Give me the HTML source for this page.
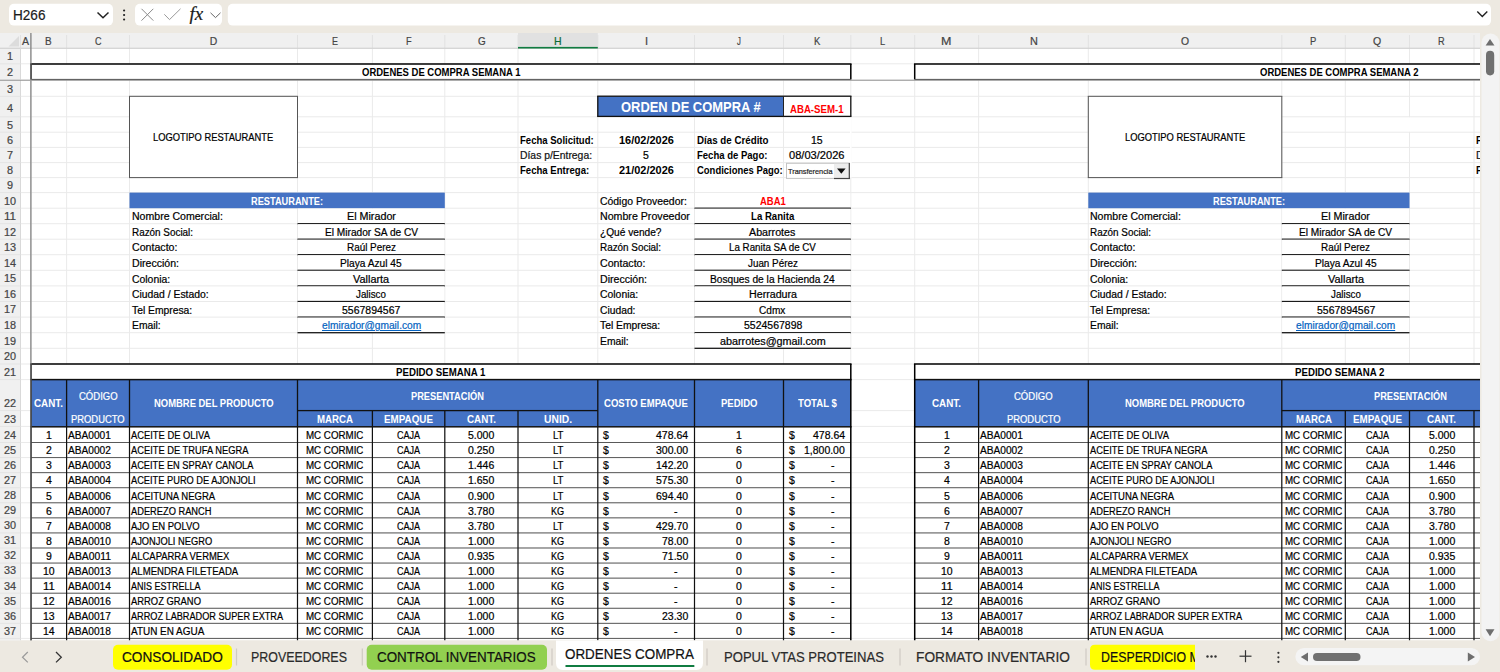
<!DOCTYPE html>
<html><head><meta charset="utf-8">
<style>
html,body{margin:0;padding:0;}
body{width:1500px;height:672px;overflow:hidden;position:relative;background:#EDE9E1;
font-family:"Liberation Sans",sans-serif;}
svg{position:absolute;left:0;top:0;}
.t{position:absolute;white-space:nowrap;transform-origin:0 0;-webkit-text-stroke:0.2px currentColor;}
#st{position:absolute;left:0;top:33px;width:1480px;height:607.5px;overflow:hidden;}
#st .in{position:absolute;left:0;top:-33px;width:1480px;height:672px;}
#cut{position:absolute;left:1090px;top:640px;width:105px;height:32px;overflow:hidden;}
</style></head><body>

<svg width="1500" height="672" viewBox="0 0 1500 672" shape-rendering="geometricPrecision">
<defs><clipPath id="cp"><rect x="0" y="33" width="1480" height="607.5"/></clipPath></defs>
<rect x="0" y="0" width="1500" height="33" fill="#EDE9E1"/>
<rect x="9" y="3.7" width="104" height="21.9" fill="#fff" rx="5"/>
<path d="M97.5 12.5 L103 17.7 L108.5 12.5" fill="none" stroke="#222" stroke-width="1.5"/>
<rect x="123" y="9.4" width="2.2" height="2.2" fill="#222" rx="1.1"/>
<rect x="123" y="13.9" width="2.2" height="2.2" fill="#222" rx="1.1"/>
<rect x="123" y="18.4" width="2.2" height="2.2" fill="#222" rx="1.1"/>
<rect x="135" y="3.7" width="87" height="21.9" fill="#fff" rx="5"/>
<path d="M141.5 8.8 L153.3 20.6 M153.3 8.8 L141.5 20.6" fill="none" stroke="#8a8a8a" stroke-width="1"/>
<path d="M164.3 14.3 L169.5 19.6 L180.5 8.8" fill="none" stroke="#9a9a9a" stroke-width="1"/>
<path d="M210.5 12.8 L215.5 17.6 L220.5 12.8" fill="none" stroke="#666" stroke-width="1"/>
<rect x="227.8" y="3.7" width="1263.2" height="21.9" fill="#fff" rx="5"/>
<path d="M1477.3 11.5 L1482.3 16.5 L1487.3 11.5" fill="none" stroke="#222" stroke-width="1.4"/>
<g clip-path="url(#cp)">
<rect x="0" y="33" width="1480" height="607.5" fill="#fff"/>
<rect x="0" y="33" width="1480" height="15.3" fill="#F0F0F0"/>
<rect x="518" y="33" width="79.8" height="15.3" fill="#E1E1E1"/>
<rect x="0" y="48.3" width="20.5" height="592.2" fill="#F0F0F0"/>
<path d="M19 36 L19 46.5 L8.5 46.5 Z" fill="#DCDCDC"/>
<rect x="30.5" y="48.3" width="1" height="592.2" fill="#EAEAEA"/>
<rect x="66.1" y="48.3" width="1" height="592.2" fill="#EAEAEA"/>
<rect x="129" y="48.3" width="1" height="592.2" fill="#EAEAEA"/>
<rect x="297" y="48.3" width="1" height="592.2" fill="#EAEAEA"/>
<rect x="371.9" y="48.3" width="1" height="592.2" fill="#EAEAEA"/>
<rect x="444.3" y="48.3" width="1" height="592.2" fill="#EAEAEA"/>
<rect x="517.5" y="48.3" width="1" height="592.2" fill="#EAEAEA"/>
<rect x="597.3" y="48.3" width="1" height="592.2" fill="#EAEAEA"/>
<rect x="694" y="48.3" width="1" height="592.2" fill="#EAEAEA"/>
<rect x="783" y="48.3" width="1" height="592.2" fill="#EAEAEA"/>
<rect x="850.3" y="48.3" width="1" height="592.2" fill="#EAEAEA"/>
<rect x="914.2" y="48.3" width="1" height="592.2" fill="#EAEAEA"/>
<rect x="978.1" y="48.3" width="1" height="592.2" fill="#EAEAEA"/>
<rect x="1087.8" y="48.3" width="1" height="592.2" fill="#EAEAEA"/>
<rect x="1281.3" y="48.3" width="1" height="592.2" fill="#EAEAEA"/>
<rect x="1344.8" y="48.3" width="1" height="592.2" fill="#EAEAEA"/>
<rect x="1409" y="48.3" width="1" height="592.2" fill="#EAEAEA"/>
<rect x="1473.5" y="48.3" width="1" height="592.2" fill="#EAEAEA"/>
<rect x="20.5" y="63.3" width="1459.5" height="1" fill="#EAEAEA"/>
<rect x="20.5" y="79.1" width="1459.5" height="1" fill="#EAEAEA"/>
<rect x="20.5" y="95.8" width="1459.5" height="1" fill="#EAEAEA"/>
<rect x="20.5" y="116.3" width="1459.5" height="1" fill="#EAEAEA"/>
<rect x="20.5" y="131.7" width="1459.5" height="1" fill="#EAEAEA"/>
<rect x="20.5" y="146.9" width="1459.5" height="1" fill="#EAEAEA"/>
<rect x="20.5" y="162.1" width="1459.5" height="1" fill="#EAEAEA"/>
<rect x="20.5" y="177.1" width="1459.5" height="1" fill="#EAEAEA"/>
<rect x="20.5" y="192.1" width="1459.5" height="1" fill="#EAEAEA"/>
<rect x="20.5" y="207.7" width="1459.5" height="1" fill="#EAEAEA"/>
<rect x="20.5" y="223.2" width="1459.5" height="1" fill="#EAEAEA"/>
<rect x="20.5" y="238.7" width="1459.5" height="1" fill="#EAEAEA"/>
<rect x="20.5" y="254.2" width="1459.5" height="1" fill="#EAEAEA"/>
<rect x="20.5" y="269.8" width="1459.5" height="1" fill="#EAEAEA"/>
<rect x="20.5" y="285.4" width="1459.5" height="1" fill="#EAEAEA"/>
<rect x="20.5" y="301" width="1459.5" height="1" fill="#EAEAEA"/>
<rect x="20.5" y="316.6" width="1459.5" height="1" fill="#EAEAEA"/>
<rect x="20.5" y="332.2" width="1459.5" height="1" fill="#EAEAEA"/>
<rect x="20.5" y="347.8" width="1459.5" height="1" fill="#EAEAEA"/>
<rect x="20.5" y="363.5" width="1459.5" height="1" fill="#EAEAEA"/>
<rect x="20.5" y="379.1" width="1459.5" height="1" fill="#EAEAEA"/>
<rect x="20.5" y="410.1" width="1459.5" height="1" fill="#EAEAEA"/>
<rect x="20.5" y="425.9" width="1459.5" height="1" fill="#EAEAEA"/>
<rect x="20.5" y="442" width="1459.5" height="1" fill="#EAEAEA"/>
<rect x="20.5" y="457.07" width="1459.5" height="1" fill="#EAEAEA"/>
<rect x="20.5" y="472.14" width="1459.5" height="1" fill="#EAEAEA"/>
<rect x="20.5" y="487.21" width="1459.5" height="1" fill="#EAEAEA"/>
<rect x="20.5" y="502.28" width="1459.5" height="1" fill="#EAEAEA"/>
<rect x="20.5" y="517.35" width="1459.5" height="1" fill="#EAEAEA"/>
<rect x="20.5" y="532.42" width="1459.5" height="1" fill="#EAEAEA"/>
<rect x="20.5" y="547.49" width="1459.5" height="1" fill="#EAEAEA"/>
<rect x="20.5" y="562.56" width="1459.5" height="1" fill="#EAEAEA"/>
<rect x="20.5" y="577.63" width="1459.5" height="1" fill="#EAEAEA"/>
<rect x="20.5" y="592.7" width="1459.5" height="1" fill="#EAEAEA"/>
<rect x="20.5" y="607.77" width="1459.5" height="1" fill="#EAEAEA"/>
<rect x="20.5" y="622.84" width="1459.5" height="1" fill="#EAEAEA"/>
<rect x="20.5" y="637.91" width="1459.5" height="1" fill="#EAEAEA"/>
<rect x="20" y="35" width="1" height="13.3" fill="#E2E2E2"/>
<rect x="30.5" y="35" width="1" height="13.3" fill="#E2E2E2"/>
<rect x="66.1" y="35" width="1" height="13.3" fill="#E2E2E2"/>
<rect x="129" y="35" width="1" height="13.3" fill="#E2E2E2"/>
<rect x="297" y="35" width="1" height="13.3" fill="#E2E2E2"/>
<rect x="371.9" y="35" width="1" height="13.3" fill="#E2E2E2"/>
<rect x="444.3" y="35" width="1" height="13.3" fill="#E2E2E2"/>
<rect x="517.5" y="35" width="1" height="13.3" fill="#E2E2E2"/>
<rect x="597.3" y="35" width="1" height="13.3" fill="#E2E2E2"/>
<rect x="694" y="35" width="1" height="13.3" fill="#E2E2E2"/>
<rect x="783" y="35" width="1" height="13.3" fill="#E2E2E2"/>
<rect x="850.3" y="35" width="1" height="13.3" fill="#E2E2E2"/>
<rect x="914.2" y="35" width="1" height="13.3" fill="#E2E2E2"/>
<rect x="978.1" y="35" width="1" height="13.3" fill="#E2E2E2"/>
<rect x="1087.8" y="35" width="1" height="13.3" fill="#E2E2E2"/>
<rect x="1281.3" y="35" width="1" height="13.3" fill="#E2E2E2"/>
<rect x="1344.8" y="35" width="1" height="13.3" fill="#E2E2E2"/>
<rect x="1409" y="35" width="1" height="13.3" fill="#E2E2E2"/>
<rect x="1473.5" y="35" width="1" height="13.3" fill="#E2E2E2"/>
<rect x="0" y="47.7" width="1480" height="1.2" fill="#D2D2D2"/>
<rect x="20" y="48.3" width="1" height="592.2" fill="#D9D9D9"/>
<rect x="0" y="63.3" width="20.5" height="1" fill="#E4E4E4"/>
<rect x="0" y="79.1" width="20.5" height="1" fill="#E4E4E4"/>
<rect x="0" y="95.8" width="20.5" height="1" fill="#E4E4E4"/>
<rect x="0" y="116.3" width="20.5" height="1" fill="#E4E4E4"/>
<rect x="0" y="131.7" width="20.5" height="1" fill="#E4E4E4"/>
<rect x="0" y="146.9" width="20.5" height="1" fill="#E4E4E4"/>
<rect x="0" y="162.1" width="20.5" height="1" fill="#E4E4E4"/>
<rect x="0" y="177.1" width="20.5" height="1" fill="#E4E4E4"/>
<rect x="0" y="192.1" width="20.5" height="1" fill="#E4E4E4"/>
<rect x="0" y="207.7" width="20.5" height="1" fill="#E4E4E4"/>
<rect x="0" y="223.2" width="20.5" height="1" fill="#E4E4E4"/>
<rect x="0" y="238.7" width="20.5" height="1" fill="#E4E4E4"/>
<rect x="0" y="254.2" width="20.5" height="1" fill="#E4E4E4"/>
<rect x="0" y="269.8" width="20.5" height="1" fill="#E4E4E4"/>
<rect x="0" y="285.4" width="20.5" height="1" fill="#E4E4E4"/>
<rect x="0" y="301" width="20.5" height="1" fill="#E4E4E4"/>
<rect x="0" y="316.6" width="20.5" height="1" fill="#E4E4E4"/>
<rect x="0" y="332.2" width="20.5" height="1" fill="#E4E4E4"/>
<rect x="0" y="347.8" width="20.5" height="1" fill="#E4E4E4"/>
<rect x="0" y="363.5" width="20.5" height="1" fill="#E4E4E4"/>
<rect x="0" y="379.1" width="20.5" height="1" fill="#E4E4E4"/>
<rect x="0" y="410.1" width="20.5" height="1" fill="#E4E4E4"/>
<rect x="0" y="425.9" width="20.5" height="1" fill="#E4E4E4"/>
<rect x="0" y="442" width="20.5" height="1" fill="#E4E4E4"/>
<rect x="0" y="457.07" width="20.5" height="1" fill="#E4E4E4"/>
<rect x="0" y="472.14" width="20.5" height="1" fill="#E4E4E4"/>
<rect x="0" y="487.21" width="20.5" height="1" fill="#E4E4E4"/>
<rect x="0" y="502.28" width="20.5" height="1" fill="#E4E4E4"/>
<rect x="0" y="517.35" width="20.5" height="1" fill="#E4E4E4"/>
<rect x="0" y="532.42" width="20.5" height="1" fill="#E4E4E4"/>
<rect x="0" y="547.49" width="20.5" height="1" fill="#E4E4E4"/>
<rect x="0" y="562.56" width="20.5" height="1" fill="#E4E4E4"/>
<rect x="0" y="577.63" width="20.5" height="1" fill="#E4E4E4"/>
<rect x="0" y="592.7" width="20.5" height="1" fill="#E4E4E4"/>
<rect x="0" y="607.77" width="20.5" height="1" fill="#E4E4E4"/>
<rect x="0" y="622.84" width="20.5" height="1" fill="#E4E4E4"/>
<rect x="0" y="637.91" width="20.5" height="1" fill="#E4E4E4"/>
<rect x="518" y="46.9" width="79.8" height="1.6" fill="#107C41"/>
<rect x="850" y="117.4" width="1.6" height="60.2" fill="#fff"/>
<rect x="1408.7" y="117.4" width="1.6" height="14.2" fill="#fff"/>
<rect x="31.5" y="64.3" width="818.8" height="14.8" fill="#fff"/>
<rect x="30.25" y="63.25" width="821.3" height="1.5" fill="#000"/>
<rect x="30.25" y="64" width="1.5" height="15.5" fill="#000"/>
<rect x="850.05" y="64" width="1.5" height="15.5" fill="#000"/>
<rect x="31" y="78.9" width="819.8" height="1" fill="#444"/>
<rect x="915.2" y="64.3" width="564.3" height="14.8" fill="#fff"/>
<rect x="913.95" y="63.25" width="566.05" height="1.5" fill="#000"/>
<rect x="913.95" y="64" width="1.5" height="15.5" fill="#000"/>
<rect x="914.7" y="78.9" width="565.3" height="1" fill="#444"/>
<rect x="130" y="96.8" width="167" height="80.3" fill="#fff"/>
<rect x="129" y="95.8" width="169" height="1" fill="#555"/>
<rect x="129" y="177.1" width="169" height="1" fill="#555"/>
<rect x="129" y="96.3" width="1" height="81.3" fill="#555"/>
<rect x="297" y="96.3" width="1" height="81.3" fill="#555"/>
<rect x="1088.8" y="96.8" width="192.5" height="80.3" fill="#fff"/>
<rect x="1087.8" y="95.8" width="194.5" height="1" fill="#555"/>
<rect x="1087.8" y="177.1" width="194.5" height="1" fill="#555"/>
<rect x="1087.8" y="96.3" width="1" height="81.3" fill="#555"/>
<rect x="1281.3" y="96.3" width="1" height="81.3" fill="#555"/>
<rect x="597.8" y="96.3" width="185.7" height="20.5" fill="#4472C4"/>
<rect x="784" y="96.8" width="66.3" height="19.5" fill="#fff"/>
<rect x="597.15" y="95.55" width="254.3" height="1.3" fill="#111"/>
<rect x="597.15" y="115.75" width="254.3" height="1.3" fill="#111"/>
<rect x="597.15" y="96.2" width="1.3" height="20.2" fill="#111"/>
<rect x="850.15" y="96.2" width="1.3" height="20.2" fill="#111"/>
<rect x="783" y="96.2" width="1" height="20.2" fill="#222"/>
<rect x="786" y="162.8" width="63.8" height="16.1" fill="#C4C4C4"/>
<rect x="787" y="163.8" width="61.8" height="14.1" fill="#fff"/>
<rect x="834" y="163.8" width="14.8" height="14.1" fill="#EDEDED"/>
<rect x="848.7" y="163" width="1.2" height="16" fill="#444"/>
<rect x="834" y="177.9" width="16" height="1.2" fill="#444"/>
<path d="M837 168.6 L845.6 168.6 L841.3 173.7 Z" fill="#111"/>
<rect x="129.5" y="192.6" width="315.3" height="15.6" fill="#4472C4"/>
<rect x="298" y="208.7" width="146.3" height="14.5" fill="#fff"/>
<rect x="297.5" y="223.05" width="147.3" height="1.3" fill="#1a1a1a"/>
<rect x="298" y="224.2" width="146.3" height="14.5" fill="#fff"/>
<rect x="297.5" y="238.55" width="147.3" height="1.3" fill="#1a1a1a"/>
<rect x="298" y="239.7" width="146.3" height="14.5" fill="#fff"/>
<rect x="297.5" y="254.05" width="147.3" height="1.3" fill="#1a1a1a"/>
<rect x="298" y="255.2" width="146.3" height="14.6" fill="#fff"/>
<rect x="297.5" y="269.65" width="147.3" height="1.3" fill="#1a1a1a"/>
<rect x="298" y="270.8" width="146.3" height="14.6" fill="#fff"/>
<rect x="297.5" y="285.25" width="147.3" height="1.3" fill="#1a1a1a"/>
<rect x="298" y="286.4" width="146.3" height="14.6" fill="#fff"/>
<rect x="297.5" y="300.85" width="147.3" height="1.3" fill="#1a1a1a"/>
<rect x="298" y="302" width="146.3" height="14.6" fill="#fff"/>
<rect x="297.5" y="316.45" width="147.3" height="1.3" fill="#1a1a1a"/>
<rect x="298" y="317.6" width="146.3" height="14.6" fill="#fff"/>
<rect x="297.5" y="332.05" width="147.3" height="1.3" fill="#1a1a1a"/>
<rect x="1088.3" y="192.6" width="321.2" height="15.6" fill="#4472C4"/>
<rect x="1282.3" y="208.7" width="126.7" height="14.5" fill="#fff"/>
<rect x="1281.8" y="223.05" width="127.7" height="1.3" fill="#1a1a1a"/>
<rect x="1282.3" y="224.2" width="126.7" height="14.5" fill="#fff"/>
<rect x="1281.8" y="238.55" width="127.7" height="1.3" fill="#1a1a1a"/>
<rect x="1282.3" y="239.7" width="126.7" height="14.5" fill="#fff"/>
<rect x="1281.8" y="254.05" width="127.7" height="1.3" fill="#1a1a1a"/>
<rect x="1282.3" y="255.2" width="126.7" height="14.6" fill="#fff"/>
<rect x="1281.8" y="269.65" width="127.7" height="1.3" fill="#1a1a1a"/>
<rect x="1282.3" y="270.8" width="126.7" height="14.6" fill="#fff"/>
<rect x="1281.8" y="285.25" width="127.7" height="1.3" fill="#1a1a1a"/>
<rect x="1282.3" y="286.4" width="126.7" height="14.6" fill="#fff"/>
<rect x="1281.8" y="300.85" width="127.7" height="1.3" fill="#1a1a1a"/>
<rect x="1282.3" y="302" width="126.7" height="14.6" fill="#fff"/>
<rect x="1281.8" y="316.45" width="127.7" height="1.3" fill="#1a1a1a"/>
<rect x="1282.3" y="317.6" width="126.7" height="14.6" fill="#fff"/>
<rect x="1281.8" y="332.05" width="127.7" height="1.3" fill="#1a1a1a"/>
<rect x="695" y="193.1" width="155.3" height="14.6" fill="#fff"/>
<rect x="694.5" y="207.55" width="156.3" height="1.3" fill="#1a1a1a"/>
<rect x="695" y="208.7" width="155.3" height="14.5" fill="#fff"/>
<rect x="694.5" y="223.05" width="156.3" height="1.3" fill="#1a1a1a"/>
<rect x="695" y="224.2" width="155.3" height="14.5" fill="#fff"/>
<rect x="694.5" y="238.55" width="156.3" height="1.3" fill="#1a1a1a"/>
<rect x="695" y="239.7" width="155.3" height="14.5" fill="#fff"/>
<rect x="694.5" y="254.05" width="156.3" height="1.3" fill="#1a1a1a"/>
<rect x="695" y="255.2" width="155.3" height="14.6" fill="#fff"/>
<rect x="694.5" y="269.65" width="156.3" height="1.3" fill="#1a1a1a"/>
<rect x="695" y="270.8" width="155.3" height="14.6" fill="#fff"/>
<rect x="694.5" y="285.25" width="156.3" height="1.3" fill="#1a1a1a"/>
<rect x="695" y="286.4" width="155.3" height="14.6" fill="#fff"/>
<rect x="694.5" y="300.85" width="156.3" height="1.3" fill="#1a1a1a"/>
<rect x="695" y="302" width="155.3" height="14.6" fill="#fff"/>
<rect x="694.5" y="316.45" width="156.3" height="1.3" fill="#1a1a1a"/>
<rect x="695" y="317.6" width="155.3" height="14.6" fill="#fff"/>
<rect x="694.5" y="332.05" width="156.3" height="1.3" fill="#1a1a1a"/>
<rect x="695" y="333.2" width="155.3" height="14.6" fill="#fff"/>
<rect x="694.5" y="347.65" width="156.3" height="1.3" fill="#1a1a1a"/>
<rect x="31.5" y="364.5" width="818.8" height="14.6" fill="#fff"/>
<rect x="31" y="379.6" width="819.8" height="46.8" fill="#4472C4"/>
<rect x="31" y="442" width="819.8" height="1" fill="#595959"/>
<rect x="31" y="457.07" width="819.8" height="1" fill="#595959"/>
<rect x="31" y="472.14" width="819.8" height="1" fill="#595959"/>
<rect x="31" y="487.21" width="819.8" height="1" fill="#595959"/>
<rect x="31" y="502.28" width="819.8" height="1" fill="#595959"/>
<rect x="31" y="517.35" width="819.8" height="1" fill="#595959"/>
<rect x="31" y="532.42" width="819.8" height="1" fill="#595959"/>
<rect x="31" y="547.49" width="819.8" height="1" fill="#595959"/>
<rect x="31" y="562.56" width="819.8" height="1" fill="#595959"/>
<rect x="31" y="577.63" width="819.8" height="1" fill="#595959"/>
<rect x="31" y="592.7" width="819.8" height="1" fill="#595959"/>
<rect x="31" y="607.77" width="819.8" height="1" fill="#595959"/>
<rect x="31" y="622.84" width="819.8" height="1" fill="#595959"/>
<rect x="31" y="637.91" width="819.8" height="1" fill="#595959"/>
<rect x="65.95" y="379.6" width="1.3" height="46.8" fill="#111"/>
<rect x="128.85" y="379.6" width="1.3" height="46.8" fill="#111"/>
<rect x="296.85" y="379.6" width="1.3" height="46.8" fill="#111"/>
<rect x="597.15" y="379.6" width="1.3" height="46.8" fill="#111"/>
<rect x="693.85" y="379.6" width="1.3" height="46.8" fill="#111"/>
<rect x="782.85" y="379.6" width="1.3" height="46.8" fill="#111"/>
<rect x="371.75" y="410.6" width="1.3" height="15.8" fill="#111"/>
<rect x="444.15" y="410.6" width="1.3" height="15.8" fill="#111"/>
<rect x="517.35" y="410.6" width="1.3" height="15.8" fill="#111"/>
<rect x="297.5" y="409.95" width="300.3" height="1.3" fill="#111"/>
<rect x="66" y="426.4" width="1.2" height="214.1" fill="#111"/>
<rect x="128.9" y="426.4" width="1.2" height="214.1" fill="#111"/>
<rect x="296.9" y="426.4" width="1.2" height="214.1" fill="#111"/>
<rect x="371.8" y="426.4" width="1.2" height="214.1" fill="#111"/>
<rect x="444.2" y="426.4" width="1.2" height="214.1" fill="#111"/>
<rect x="517.4" y="426.4" width="1.2" height="214.1" fill="#111"/>
<rect x="597.2" y="426.4" width="1.2" height="214.1" fill="#111"/>
<rect x="693.9" y="426.4" width="1.2" height="214.1" fill="#111"/>
<rect x="782.9" y="426.4" width="1.2" height="214.1" fill="#111"/>
<rect x="30.25" y="363.25" width="821.3" height="1.5" fill="#000"/>
<rect x="30.25" y="378.85" width="821.3" height="1.5" fill="#111"/>
<rect x="30.25" y="426.05" width="821.3" height="1.5" fill="#111"/>
<rect x="30.25" y="364" width="1.5" height="276.5" fill="#000"/>
<rect x="850.05" y="364" width="1.5" height="276.5" fill="#000"/>
<rect x="915.2" y="364.5" width="564.3" height="14.6" fill="#fff"/>
<rect x="914.7" y="379.6" width="565.3" height="46.8" fill="#4472C4"/>
<rect x="914.7" y="442" width="565.3" height="1" fill="#595959"/>
<rect x="914.7" y="457.07" width="565.3" height="1" fill="#595959"/>
<rect x="914.7" y="472.14" width="565.3" height="1" fill="#595959"/>
<rect x="914.7" y="487.21" width="565.3" height="1" fill="#595959"/>
<rect x="914.7" y="502.28" width="565.3" height="1" fill="#595959"/>
<rect x="914.7" y="517.35" width="565.3" height="1" fill="#595959"/>
<rect x="914.7" y="532.42" width="565.3" height="1" fill="#595959"/>
<rect x="914.7" y="547.49" width="565.3" height="1" fill="#595959"/>
<rect x="914.7" y="562.56" width="565.3" height="1" fill="#595959"/>
<rect x="914.7" y="577.63" width="565.3" height="1" fill="#595959"/>
<rect x="914.7" y="592.7" width="565.3" height="1" fill="#595959"/>
<rect x="914.7" y="607.77" width="565.3" height="1" fill="#595959"/>
<rect x="914.7" y="622.84" width="565.3" height="1" fill="#595959"/>
<rect x="914.7" y="637.91" width="565.3" height="1" fill="#595959"/>
<rect x="977.95" y="379.6" width="1.3" height="46.8" fill="#111"/>
<rect x="1087.65" y="379.6" width="1.3" height="46.8" fill="#111"/>
<rect x="1281.15" y="379.6" width="1.3" height="46.8" fill="#111"/>
<rect x="1344.65" y="410.6" width="1.3" height="15.8" fill="#111"/>
<rect x="1408.85" y="410.6" width="1.3" height="15.8" fill="#111"/>
<rect x="1473.35" y="410.6" width="1.3" height="15.8" fill="#111"/>
<rect x="1281.8" y="409.95" width="198.2" height="1.3" fill="#111"/>
<rect x="978" y="426.4" width="1.2" height="214.1" fill="#111"/>
<rect x="1087.7" y="426.4" width="1.2" height="214.1" fill="#111"/>
<rect x="1281.2" y="426.4" width="1.2" height="214.1" fill="#111"/>
<rect x="1344.7" y="426.4" width="1.2" height="214.1" fill="#111"/>
<rect x="1408.9" y="426.4" width="1.2" height="214.1" fill="#111"/>
<rect x="1473.4" y="426.4" width="1.2" height="214.1" fill="#111"/>
<rect x="913.95" y="363.25" width="566.8" height="1.5" fill="#000"/>
<rect x="913.95" y="378.85" width="566.8" height="1.5" fill="#111"/>
<rect x="913.95" y="426.05" width="566.8" height="1.5" fill="#111"/>
<rect x="913.95" y="364" width="1.5" height="276.5" fill="#000"/>
<rect x="30.3" y="33" width="1.2" height="607.5" fill="#7A7A7A"/>
<rect x="0" y="79.8" width="1480" height="1" fill="#9A9A9A"/>
</g>
<rect x="1481.5" y="33.5" width="18" height="607.7" fill="#F3F3F3" rx="9"/>
<path d="M1485.6 45.5 L1490 38.9 L1494.5 45.5 Z" fill="#6E6E6E"/>
<rect x="1486" y="50.8" width="8.2" height="24.6" fill="#707070" rx="4.1"/>
<path d="M1485.6 629.3 L1490 636.3 L1494.5 629.3 Z" fill="#6E6E6E"/>
<path d="M27.8 652 L22.5 657.2 L27.8 662.4" fill="none" stroke="#9a9a9a" stroke-width="1.2"/>
<path d="M56 652 L61.3 657.2 L56 662.4" fill="none" stroke="#333" stroke-width="1.3"/>
<rect x="113" y="644.8" width="119" height="25" fill="#FFFF00" rx="5"/>
<rect x="235.9" y="648.5" width="1.2" height="17" fill="#CFCBC3"/>
<rect x="361.7" y="648.5" width="1.2" height="17" fill="#CFCBC3"/>
<rect x="366.7" y="644.8" width="180.3" height="25" fill="#92D050" rx="5"/>
<rect x="551.4" y="648.5" width="1.2" height="17" fill="#CFCBC3"/>
<path d="M556 640.5 L703 640.5 L703 663 Q703 670 696 670 L563 670 Q556 670 556 663 Z" fill="#fff"/>
<rect x="565.3" y="665.1" width="129.2" height="1.9" fill="#107C41" rx="0.8"/>
<rect x="706.4" y="648.5" width="1.2" height="17" fill="#CFCBC3"/>
<rect x="899.4" y="648.5" width="1.2" height="17" fill="#CFCBC3"/>
<rect x="1085.4" y="648.5" width="1.2" height="17" fill="#CFCBC3"/>
<path d="M1095 644.8 L1195 644.8 L1195 669.8 L1095 669.8 Q1090 669.8 1090 664.8 L1090 649.8 Q1090 644.8 1095 644.8 Z" fill="#FFFF00"/>
<rect x="1206.3" y="655.3" width="2.4" height="2.4" fill="#333" rx="1.2"/>
<rect x="1210.3" y="655.3" width="2.4" height="2.4" fill="#333" rx="1.2"/>
<rect x="1214.3" y="655.3" width="2.4" height="2.4" fill="#333" rx="1.2"/>
<rect x="1239.5" y="655.6" width="12" height="1.2" fill="#333"/>
<rect x="1244.9" y="650.2" width="1.2" height="12" fill="#333"/>
<rect x="1277.3" y="651.7" width="2.2" height="2.2" fill="#333" rx="1.1"/>
<rect x="1277.3" y="656.2" width="2.2" height="2.2" fill="#333" rx="1.1"/>
<rect x="1277.3" y="660.7" width="2.2" height="2.2" fill="#333" rx="1.1"/>
<rect x="1295.4" y="648" width="184.6" height="17.3" fill="#F4F4F4" rx="8.6"/>
<path d="M1308 652.5 L1308 661.4 L1300.8 657 Z" fill="#6E6E6E"/>
<rect x="1313" y="653" width="47.5" height="8" fill="#707070" rx="4"/>
<path d="M1467.8 652.5 L1467.8 661.4 L1475 657 Z" fill="#6E6E6E"/>
</svg>
<div id="st"><div class="in">
<div class="t" style="left:22.22px;top:35.89px;font-size:10.4px;line-height:11.62px;color:#454545;transform:scaleX(1.0183);">A</div>
<div class="t" style="left:45.48px;top:35.89px;font-size:10.4px;line-height:11.62px;color:#454545;transform:scaleX(0.9567);">B</div>
<div class="t" style="left:94.8px;top:35.89px;font-size:10.4px;line-height:11.62px;color:#454545;transform:scaleX(0.8658);">C</div>
<div class="t" style="left:209.75px;top:35.89px;font-size:10.4px;line-height:11.62px;color:#454545;">D</div>
<div class="t" style="left:331.97px;top:35.89px;font-size:10.4px;line-height:11.62px;color:#454545;transform:scaleX(0.8582);">E</div>
<div class="t" style="left:405.8px;top:35.89px;font-size:10.4px;line-height:11.62px;color:#454545;transform:scaleX(0.8815);">F</div>
<div class="t" style="left:477.55px;top:35.89px;font-size:10.4px;line-height:11.62px;color:#454545;transform:scaleX(0.9517);">G</div>
<div class="t" style="left:554.1px;top:35.89px;font-size:10.4px;line-height:11.62px;color:#0E6B35;transform:scaleX(1.0120);">H</div>
<div class="t" style="left:644.61px;top:35.89px;font-size:10.4px;line-height:11.62px;color:#454545;transform:scaleX(1.0641);">I</div>
<div class="t" style="left:737.05px;top:35.89px;font-size:10.4px;line-height:11.62px;color:#454545;transform:scaleX(0.7484);">J</div>
<div class="t" style="left:813.98px;top:35.89px;font-size:10.4px;line-height:11.62px;color:#454545;transform:scaleX(0.9145);">K</div>
<div class="t" style="left:880.19px;top:35.89px;font-size:10.4px;line-height:11.62px;color:#454545;transform:scaleX(0.8859);">L</div>
<div class="t" style="left:941.43px;top:35.89px;font-size:10.4px;line-height:11.62px;color:#454545;transform:scaleX(1.2040);">M</div>
<div class="t" style="left:1029.51px;top:35.89px;font-size:10.4px;line-height:11.62px;color:#454545;transform:scaleX(1.0493);">N</div>
<div class="t" style="left:1181.01px;top:35.89px;font-size:10.4px;line-height:11.62px;color:#454545;">O</div>
<div class="t" style="left:1310.4px;top:35.89px;font-size:10.4px;line-height:11.62px;color:#454545;transform:scaleX(0.9092);">P</div>
<div class="t" style="left:1373.29px;top:35.89px;font-size:10.4px;line-height:11.62px;color:#454545;transform:scaleX(1.0150);">Q</div>
<div class="t" style="left:1438.44px;top:35.89px;font-size:10.4px;line-height:11.62px;color:#454545;transform:scaleX(0.8820);">R</div>
<div class="t" style="left:1503.7px;top:35.89px;font-size:10.4px;line-height:11.62px;color:#454545;transform:scaleX(0.8072);">S</div>
<div class="t" style="left:7.23px;top:51.15px;font-size:10px;line-height:11.17px;color:#454545;transform:scaleX(1.0848);">1</div>
<div class="t" style="left:7.23px;top:66.95px;font-size:10px;line-height:11.17px;color:#454545;transform:scaleX(1.0848);">2</div>
<div class="t" style="left:7.23px;top:83.65px;font-size:10px;line-height:11.17px;color:#454545;transform:scaleX(1.0848);">3</div>
<div class="t" style="left:7.23px;top:102.75px;font-size:10px;line-height:11.17px;color:#454545;transform:scaleX(1.0848);">4</div>
<div class="t" style="left:7.23px;top:119.55px;font-size:10px;line-height:11.17px;color:#454545;transform:scaleX(1.0848);">5</div>
<div class="t" style="left:7.23px;top:134.75px;font-size:10px;line-height:11.17px;color:#454545;transform:scaleX(1.0848);">6</div>
<div class="t" style="left:7.23px;top:149.95px;font-size:10px;line-height:11.17px;color:#454545;transform:scaleX(1.0848);">7</div>
<div class="t" style="left:7.23px;top:164.95px;font-size:10px;line-height:11.17px;color:#454545;transform:scaleX(1.0848);">8</div>
<div class="t" style="left:7.23px;top:179.95px;font-size:10px;line-height:11.17px;color:#454545;transform:scaleX(1.0848);">9</div>
<div class="t" style="left:4.22px;top:195.55px;font-size:10px;line-height:11.17px;color:#454545;transform:scaleX(1.0848);">10</div>
<div class="t" style="left:4.22px;top:211.05px;font-size:10px;line-height:11.17px;color:#454545;transform:scaleX(1.1623);">11</div>
<div class="t" style="left:4.22px;top:226.55px;font-size:10px;line-height:11.17px;color:#454545;transform:scaleX(1.0848);">12</div>
<div class="t" style="left:4.22px;top:242.05px;font-size:10px;line-height:11.17px;color:#454545;transform:scaleX(1.0848);">13</div>
<div class="t" style="left:4.22px;top:257.65px;font-size:10px;line-height:11.17px;color:#454545;transform:scaleX(1.0848);">14</div>
<div class="t" style="left:4.22px;top:273.25px;font-size:10px;line-height:11.17px;color:#454545;transform:scaleX(1.0848);">15</div>
<div class="t" style="left:4.22px;top:288.85px;font-size:10px;line-height:11.17px;color:#454545;transform:scaleX(1.0848);">16</div>
<div class="t" style="left:4.22px;top:304.45px;font-size:10px;line-height:11.17px;color:#454545;transform:scaleX(1.0848);">17</div>
<div class="t" style="left:4.22px;top:320.05px;font-size:10px;line-height:11.17px;color:#454545;transform:scaleX(1.0848);">18</div>
<div class="t" style="left:4.22px;top:335.65px;font-size:10px;line-height:11.17px;color:#454545;transform:scaleX(1.0848);">19</div>
<div class="t" style="left:4.22px;top:351.35px;font-size:10px;line-height:11.17px;color:#454545;transform:scaleX(1.0848);">20</div>
<div class="t" style="left:4.22px;top:366.95px;font-size:10px;line-height:11.17px;color:#454545;transform:scaleX(1.0848);">21</div>
<div class="t" style="left:4.22px;top:397.95px;font-size:10px;line-height:11.17px;color:#454545;transform:scaleX(1.0848);">22</div>
<div class="t" style="left:4.22px;top:413.75px;font-size:10px;line-height:11.17px;color:#454545;transform:scaleX(1.0848);">23</div>
<div class="t" style="left:4.22px;top:429.85px;font-size:10px;line-height:11.17px;color:#454545;transform:scaleX(1.0848);">24</div>
<div class="t" style="left:4.22px;top:444.92px;font-size:10px;line-height:11.17px;color:#454545;transform:scaleX(1.0848);">25</div>
<div class="t" style="left:4.22px;top:459.99px;font-size:10px;line-height:11.17px;color:#454545;transform:scaleX(1.0848);">26</div>
<div class="t" style="left:4.22px;top:475.06px;font-size:10px;line-height:11.17px;color:#454545;transform:scaleX(1.0848);">27</div>
<div class="t" style="left:4.22px;top:490.13px;font-size:10px;line-height:11.17px;color:#454545;transform:scaleX(1.0848);">28</div>
<div class="t" style="left:4.22px;top:505.2px;font-size:10px;line-height:11.17px;color:#454545;transform:scaleX(1.0848);">29</div>
<div class="t" style="left:4.22px;top:520.27px;font-size:10px;line-height:11.17px;color:#454545;transform:scaleX(1.0848);">30</div>
<div class="t" style="left:4.22px;top:535.34px;font-size:10px;line-height:11.17px;color:#454545;transform:scaleX(1.0848);">31</div>
<div class="t" style="left:4.22px;top:550.41px;font-size:10px;line-height:11.17px;color:#454545;transform:scaleX(1.0848);">32</div>
<div class="t" style="left:4.22px;top:565.48px;font-size:10px;line-height:11.17px;color:#454545;transform:scaleX(1.0848);">33</div>
<div class="t" style="left:4.22px;top:580.55px;font-size:10px;line-height:11.17px;color:#454545;transform:scaleX(1.0848);">34</div>
<div class="t" style="left:4.22px;top:595.62px;font-size:10px;line-height:11.17px;color:#454545;transform:scaleX(1.0848);">35</div>
<div class="t" style="left:4.22px;top:610.69px;font-size:10px;line-height:11.17px;color:#454545;transform:scaleX(1.0848);">36</div>
<div class="t" style="left:4.22px;top:625.76px;font-size:10px;line-height:11.17px;color:#454545;transform:scaleX(1.0848);">37</div>
<div class="t" style="left:361.65px;top:67.15px;font-size:10px;line-height:11.17px;color:#000;font-weight:bold;-webkit-text-stroke:0;transform:scaleX(0.9487);">ORDENES DE COMPRA SEMANA 1</div>
<div class="t" style="left:1260.1px;top:67.15px;font-size:10px;line-height:11.17px;color:#000;font-weight:bold;-webkit-text-stroke:0;transform:scaleX(0.9487);">ORDENES DE COMPRA SEMANA 2</div>
<div class="t" style="left:153.35px;top:131.65px;font-size:10px;line-height:11.17px;color:#000;transform:scaleX(0.9345);">LOGOTIPO RESTAURANTE</div>
<div class="t" style="left:1124.9px;top:131.65px;font-size:10px;line-height:11.17px;color:#000;transform:scaleX(0.9345);">LOGOTIPO RESTAURANTE</div>
<div class="t" style="left:620.81px;top:99.71px;font-size:13.8px;line-height:15.41px;color:#fff;font-weight:bold;-webkit-text-stroke:0;transform:scaleX(0.9374);">ORDEN DE COMPRA #</div>
<div class="t" style="left:790.38px;top:103.55px;font-size:10px;line-height:11.17px;color:#FF0000;font-weight:bold;-webkit-text-stroke:0;transform:scaleX(0.9635);">ABA-SEM-1</div>
<div class="t" style="left:520px;top:134.85px;font-size:10px;line-height:11.17px;color:#000;font-weight:bold;-webkit-text-stroke:0;transform:scaleX(0.9535);">Fecha Solicitud:</div>
<div class="t" style="left:618.73px;top:134.85px;font-size:10px;line-height:11.17px;color:#000;font-weight:bold;-webkit-text-stroke:0;transform:scaleX(1.0959);">16/02/2026</div>
<div class="t" style="left:520px;top:150.05px;font-size:10px;line-height:11.17px;color:#111111;transform:scaleX(1.0367);">Días p/Entrega:</div>
<div class="t" style="left:643.23px;top:150.05px;font-size:10px;line-height:11.17px;color:#000;transform:scaleX(1.0483);">5</div>
<div class="t" style="left:520px;top:165.05px;font-size:10px;line-height:11.17px;color:#000;font-weight:bold;-webkit-text-stroke:0;transform:scaleX(0.9582);">Fecha Entrega:</div>
<div class="t" style="left:618.73px;top:165.05px;font-size:10px;line-height:11.17px;color:#000;font-weight:bold;-webkit-text-stroke:0;transform:scaleX(1.0959);">21/02/2026</div>
<div class="t" style="left:696.5px;top:134.85px;font-size:10px;line-height:11.17px;color:#000;font-weight:bold;-webkit-text-stroke:0;transform:scaleX(0.9754);">Días de Crédito</div>
<div class="t" style="left:811.32px;top:134.85px;font-size:10px;line-height:11.17px;color:#000;transform:scaleX(1.0483);">15</div>
<div class="t" style="left:696.5px;top:150.05px;font-size:10px;line-height:11.17px;color:#000;font-weight:bold;-webkit-text-stroke:0;transform:scaleX(0.9528);">Fecha de Pago:</div>
<div class="t" style="left:789.39px;top:150.05px;font-size:10px;line-height:11.17px;color:#000;transform:scaleX(1.1093);">08/03/2026</div>
<div class="t" style="left:696.5px;top:165.05px;font-size:10px;line-height:11.17px;color:#000;font-weight:bold;-webkit-text-stroke:0;transform:scaleX(0.9466);">Condiciones Pago:</div>
<div class="t" style="left:788.4px;top:167.94px;font-size:7.8px;line-height:8.71px;color:#222;transform:scaleX(0.9409);">Transferencia</div>
<div class="t" style="left:1476px;top:134.85px;font-size:10px;line-height:11.17px;color:#000;font-weight:bold;-webkit-text-stroke:0;transform:scaleX(0.9535);">Fecha Solicitud:</div>
<div class="t" style="left:1476px;top:150.05px;font-size:10px;line-height:11.17px;color:#111111;transform:scaleX(1.0367);">Días p/Entrega:</div>
<div class="t" style="left:1476px;top:165.05px;font-size:10px;line-height:11.17px;color:#000;font-weight:bold;-webkit-text-stroke:0;transform:scaleX(0.9582);">Fecha Entrega:</div>
<div class="t" style="left:251.1px;top:195.75px;font-size:10px;line-height:11.17px;color:#fff;font-weight:bold;-webkit-text-stroke:0;transform:scaleX(0.9226);">RESTAURANTE:</div>
<div class="t" style="left:131.5px;top:211.35px;font-size:10px;line-height:11.17px;color:#000;transform:scaleX(1.0553);">Nombre Comercial:</div>
<div class="t" style="left:346.68px;top:211.35px;font-size:10px;line-height:11.17px;color:#000;transform:scaleX(1.0741);">El Mirador</div>
<div class="t" style="left:131.5px;top:226.85px;font-size:10px;line-height:11.17px;color:#000;transform:scaleX(0.9895);">Razón Social:</div>
<div class="t" style="left:324.6px;top:226.85px;font-size:10px;line-height:11.17px;color:#000;transform:scaleX(1.0151);">El Mirador SA de CV</div>
<div class="t" style="left:131.5px;top:242.35px;font-size:10px;line-height:11.17px;color:#000;transform:scaleX(1.0618);">Contacto:</div>
<div class="t" style="left:346.66px;top:242.35px;font-size:10px;line-height:11.17px;color:#000;transform:scaleX(0.9901);">Raúl Perez</div>
<div class="t" style="left:131.5px;top:257.95px;font-size:10px;line-height:11.17px;color:#000;transform:scaleX(1.0569);">Dirección:</div>
<div class="t" style="left:340.38px;top:257.95px;font-size:10px;line-height:11.17px;color:#000;transform:scaleX(1.0155);">Playa Azul 45</div>
<div class="t" style="left:131.5px;top:273.55px;font-size:10px;line-height:11.17px;color:#000;transform:scaleX(1.0397);">Colonia:</div>
<div class="t" style="left:353.06px;top:273.55px;font-size:10px;line-height:11.17px;color:#000;transform:scaleX(1.0909);">Vallarta</div>
<div class="t" style="left:131.5px;top:289.15px;font-size:10px;line-height:11.17px;color:#000;transform:scaleX(1.0370);">Ciudad / Estado:</div>
<div class="t" style="left:356.22px;top:289.15px;font-size:10px;line-height:11.17px;color:#000;transform:scaleX(0.9770);">Jalisco</div>
<div class="t" style="left:131.5px;top:304.75px;font-size:10px;line-height:11.17px;color:#000;transform:scaleX(1.0320);">Tel Empresa:</div>
<div class="t" style="left:342px;top:304.75px;font-size:10px;line-height:11.17px;color:#000;transform:scaleX(1.0483);">5567894567</div>
<div class="t" style="left:131.5px;top:320.35px;font-size:10px;line-height:11.17px;color:#000;transform:scaleX(1.0314);">Email:</div>
<div class="t" style="left:321.55px;top:320.35px;font-size:10px;line-height:11.17px;color:#0563C1;transform:scaleX(1.0185);text-decoration:underline;text-decoration-thickness:0.8px;">elmirador@gmail.com</div>
<div class="t" style="left:1212.85px;top:195.75px;font-size:10px;line-height:11.17px;color:#fff;font-weight:bold;-webkit-text-stroke:0;transform:scaleX(0.9226);">RESTAURANTE:</div>
<div class="t" style="left:1090.3px;top:211.35px;font-size:10px;line-height:11.17px;color:#000;transform:scaleX(1.0553);">Nombre Comercial:</div>
<div class="t" style="left:1321.18px;top:211.35px;font-size:10px;line-height:11.17px;color:#000;transform:scaleX(1.0741);">El Mirador</div>
<div class="t" style="left:1090.3px;top:226.85px;font-size:10px;line-height:11.17px;color:#000;transform:scaleX(0.9895);">Razón Social:</div>
<div class="t" style="left:1299.1px;top:226.85px;font-size:10px;line-height:11.17px;color:#000;transform:scaleX(1.0151);">El Mirador SA de CV</div>
<div class="t" style="left:1090.3px;top:242.35px;font-size:10px;line-height:11.17px;color:#000;transform:scaleX(1.0618);">Contacto:</div>
<div class="t" style="left:1321.16px;top:242.35px;font-size:10px;line-height:11.17px;color:#000;transform:scaleX(0.9901);">Raúl Perez</div>
<div class="t" style="left:1090.3px;top:257.95px;font-size:10px;line-height:11.17px;color:#000;transform:scaleX(1.0569);">Dirección:</div>
<div class="t" style="left:1314.88px;top:257.95px;font-size:10px;line-height:11.17px;color:#000;transform:scaleX(1.0155);">Playa Azul 45</div>
<div class="t" style="left:1090.3px;top:273.55px;font-size:10px;line-height:11.17px;color:#000;transform:scaleX(1.0397);">Colonia:</div>
<div class="t" style="left:1327.56px;top:273.55px;font-size:10px;line-height:11.17px;color:#000;transform:scaleX(1.0909);">Vallarta</div>
<div class="t" style="left:1090.3px;top:289.15px;font-size:10px;line-height:11.17px;color:#000;transform:scaleX(1.0370);">Ciudad / Estado:</div>
<div class="t" style="left:1330.72px;top:289.15px;font-size:10px;line-height:11.17px;color:#000;transform:scaleX(0.9770);">Jalisco</div>
<div class="t" style="left:1090.3px;top:304.75px;font-size:10px;line-height:11.17px;color:#000;transform:scaleX(1.0320);">Tel Empresa:</div>
<div class="t" style="left:1316.5px;top:304.75px;font-size:10px;line-height:11.17px;color:#000;transform:scaleX(1.0483);">5567894567</div>
<div class="t" style="left:1090.3px;top:320.35px;font-size:10px;line-height:11.17px;color:#000;transform:scaleX(1.0314);">Email:</div>
<div class="t" style="left:1296.05px;top:320.35px;font-size:10px;line-height:11.17px;color:#0563C1;transform:scaleX(1.0185);text-decoration:underline;text-decoration-thickness:0.8px;">elmirador@gmail.com</div>
<div class="t" style="left:599.8px;top:195.85px;font-size:10px;line-height:11.17px;color:#000;transform:scaleX(1.0410);">Código Proveedor:</div>
<div class="t" style="left:759.74px;top:195.85px;font-size:10px;line-height:11.17px;color:#FF0000;font-weight:bold;-webkit-text-stroke:0;transform:scaleX(0.9481);">ABA1</div>
<div class="t" style="left:599.8px;top:211.35px;font-size:10px;line-height:11.17px;color:#000;transform:scaleX(1.0633);">Nombre Proveedor</div>
<div class="t" style="left:750.99px;top:211.35px;font-size:10px;line-height:11.17px;color:#000;font-weight:bold;-webkit-text-stroke:0;transform:scaleX(0.9624);">La Ranita</div>
<div class="t" style="left:599.8px;top:226.85px;font-size:10px;line-height:11.17px;color:#000;transform:scaleX(1.0146);">¿Qué vende?</div>
<div class="t" style="left:749.47px;top:226.85px;font-size:10px;line-height:11.17px;color:#000;transform:scaleX(1.0695);">Abarrotes</div>
<div class="t" style="left:599.8px;top:242.35px;font-size:10px;line-height:11.17px;color:#000;transform:scaleX(0.9895);">Razón Social:</div>
<div class="t" style="left:729.21px;top:242.35px;font-size:10px;line-height:11.17px;color:#000;transform:scaleX(0.9767);">La Ranita SA de CV</div>
<div class="t" style="left:599.8px;top:257.95px;font-size:10px;line-height:11.17px;color:#000;transform:scaleX(1.0618);">Contacto:</div>
<div class="t" style="left:747.75px;top:257.95px;font-size:10px;line-height:11.17px;color:#000;transform:scaleX(0.9846);">Juan Pérez</div>
<div class="t" style="left:599.8px;top:273.55px;font-size:10px;line-height:11.17px;color:#000;transform:scaleX(1.0569);">Dirección:</div>
<div class="t" style="left:710.37px;top:273.55px;font-size:10px;line-height:11.17px;color:#000;transform:scaleX(1.0183);">Bosques de la Hacienda 24</div>
<div class="t" style="left:599.8px;top:289.15px;font-size:10px;line-height:11.17px;color:#000;transform:scaleX(1.0397);">Colonia:</div>
<div class="t" style="left:748.64px;top:289.15px;font-size:10px;line-height:11.17px;color:#000;transform:scaleX(1.0667);">Herradura</div>
<div class="t" style="left:599.8px;top:304.75px;font-size:10px;line-height:11.17px;color:#000;transform:scaleX(1.0289);">Ciudad:</div>
<div class="t" style="left:759.48px;top:304.75px;font-size:10px;line-height:11.17px;color:#000;transform:scaleX(1.0085);">Cdmx</div>
<div class="t" style="left:599.8px;top:320.35px;font-size:10px;line-height:11.17px;color:#000;transform:scaleX(1.0320);">Tel Empresa:</div>
<div class="t" style="left:743.5px;top:320.35px;font-size:10px;line-height:11.17px;color:#000;transform:scaleX(1.0483);">5524567898</div>
<div class="t" style="left:599.8px;top:335.95px;font-size:10px;line-height:11.17px;color:#000;transform:scaleX(1.0314);">Email:</div>
<div class="t" style="left:719.75px;top:335.95px;font-size:10px;line-height:11.17px;color:#000;transform:scaleX(1.0800);">abarrotes@gmail.com</div>
<div class="t" style="left:396.22px;top:366.85px;font-size:10px;line-height:11.17px;color:#000;font-weight:bold;-webkit-text-stroke:0;transform:scaleX(0.9668);">PEDIDO SEMANA 1</div>
<div class="t" style="left:34.32px;top:397.95px;font-size:10px;line-height:11.17px;color:#fff;font-weight:bold;-webkit-text-stroke:0;transform:scaleX(0.9833);">CANT.</div>
<div class="t" style="left:78.76px;top:390.55px;font-size:10px;line-height:11.17px;color:#fff;transform:scaleX(0.9513);">CÓDIGO</div>
<div class="t" style="left:71.25px;top:413.75px;font-size:10px;line-height:11.17px;color:#fff;transform:scaleX(0.9397);">PRODUCTO</div>
<div class="t" style="left:153.65px;top:397.95px;font-size:10px;line-height:11.17px;color:#fff;font-weight:bold;-webkit-text-stroke:0;transform:scaleX(0.9435);">NOMBRE DEL PRODUCTO</div>
<div class="t" style="left:411.2px;top:390.55px;font-size:10px;line-height:11.17px;color:#fff;font-weight:bold;-webkit-text-stroke:0;transform:scaleX(0.9261);">PRESENTACIÓN</div>
<div class="t" style="left:316.95px;top:414.15px;font-size:10px;line-height:11.17px;color:#fff;font-weight:bold;-webkit-text-stroke:0;transform:scaleX(0.9672);">MARCA</div>
<div class="t" style="left:384.08px;top:414.15px;font-size:10px;line-height:11.17px;color:#fff;font-weight:bold;-webkit-text-stroke:0;transform:scaleX(0.9843);">EMPAQUE</div>
<div class="t" style="left:466.92px;top:414.15px;font-size:10px;line-height:11.17px;color:#fff;font-weight:bold;-webkit-text-stroke:0;transform:scaleX(0.9833);">CANT.</div>
<div class="t" style="left:543.88px;top:414.15px;font-size:10px;line-height:11.17px;color:#fff;font-weight:bold;-webkit-text-stroke:0;transform:scaleX(1.0303);">UNID.</div>
<div class="t" style="left:604.22px;top:397.95px;font-size:10px;line-height:11.17px;color:#fff;font-weight:bold;-webkit-text-stroke:0;transform:scaleX(0.9533);">COSTO EMPAQUE</div>
<div class="t" style="left:720.75px;top:397.95px;font-size:10px;line-height:11.17px;color:#fff;font-weight:bold;-webkit-text-stroke:0;transform:scaleX(0.9522);">PEDIDO</div>
<div class="t" style="left:797.73px;top:397.95px;font-size:10px;line-height:11.17px;color:#fff;font-weight:bold;-webkit-text-stroke:0;transform:scaleX(0.9573);">TOTAL $</div>
<div class="t" style="left:45.88px;top:430.25px;font-size:10px;line-height:11.17px;color:#000;transform:scaleX(1.0483);">1</div>
<div class="t" style="left:68.4px;top:430.25px;font-size:10px;line-height:11.17px;color:#000;transform:scaleX(1.0151);">ABA0001</div>
<div class="t" style="left:131.3px;top:430.25px;font-size:10px;line-height:11.17px;color:#000;transform:scaleX(0.9363);">ACEITE DE OLIVA</div>
<div class="t" style="left:306.25px;top:430.25px;font-size:10px;line-height:11.17px;color:#000;transform:scaleX(0.9750);">MC CORMIC</div>
<div class="t" style="left:397.04px;top:430.25px;font-size:10px;line-height:11.17px;color:#000;transform:scaleX(0.9043);">CAJA</div>
<div class="t" style="left:468.29px;top:430.25px;font-size:10px;line-height:11.17px;color:#000;transform:scaleX(1.0478);">5.000</div>
<div class="t" style="left:552.68px;top:430.25px;font-size:10px;line-height:11.17px;color:#000;transform:scaleX(0.9545);">LT</div>
<div class="t" style="left:603.3px;top:430.25px;font-size:10px;line-height:11.17px;color:#000;transform:scaleX(1.0483);">$</div>
<div class="t" style="left:656.25px;top:430.25px;font-size:10px;line-height:11.17px;color:#000;transform:scaleX(1.0479);">478.64</div>
<div class="t" style="left:736.08px;top:430.25px;font-size:10px;line-height:11.17px;color:#000;transform:scaleX(1.0483);">1</div>
<div class="t" style="left:789px;top:430.25px;font-size:10px;line-height:11.17px;color:#000;transform:scaleX(1.0483);">$</div>
<div class="t" style="left:812.65px;top:430.25px;font-size:10px;line-height:11.17px;color:#000;transform:scaleX(1.0479);">478.64</div>
<div class="t" style="left:45.88px;top:445.32px;font-size:10px;line-height:11.17px;color:#000;transform:scaleX(1.0483);">2</div>
<div class="t" style="left:68.4px;top:445.32px;font-size:10px;line-height:11.17px;color:#000;transform:scaleX(1.0151);">ABA0002</div>
<div class="t" style="left:131.3px;top:445.32px;font-size:10px;line-height:11.17px;color:#000;transform:scaleX(0.9317);">ACEITE DE TRUFA NEGRA</div>
<div class="t" style="left:306.25px;top:445.32px;font-size:10px;line-height:11.17px;color:#000;transform:scaleX(0.9750);">MC CORMIC</div>
<div class="t" style="left:397.04px;top:445.32px;font-size:10px;line-height:11.17px;color:#000;transform:scaleX(0.9043);">CAJA</div>
<div class="t" style="left:468.29px;top:445.32px;font-size:10px;line-height:11.17px;color:#000;transform:scaleX(1.0478);">0.250</div>
<div class="t" style="left:552.68px;top:445.32px;font-size:10px;line-height:11.17px;color:#000;transform:scaleX(0.9545);">LT</div>
<div class="t" style="left:603.3px;top:445.32px;font-size:10px;line-height:11.17px;color:#000;transform:scaleX(1.0483);">$</div>
<div class="t" style="left:656.25px;top:445.32px;font-size:10px;line-height:11.17px;color:#000;transform:scaleX(1.0479);">300.00</div>
<div class="t" style="left:736.08px;top:445.32px;font-size:10px;line-height:11.17px;color:#000;transform:scaleX(1.0483);">6</div>
<div class="t" style="left:789px;top:445.32px;font-size:10px;line-height:11.17px;color:#000;transform:scaleX(1.0483);">$</div>
<div class="t" style="left:803.94px;top:445.32px;font-size:10px;line-height:11.17px;color:#000;transform:scaleX(1.0470);">1,800.00</div>
<div class="t" style="left:45.88px;top:460.39px;font-size:10px;line-height:11.17px;color:#000;transform:scaleX(1.0483);">3</div>
<div class="t" style="left:68.4px;top:460.39px;font-size:10px;line-height:11.17px;color:#000;transform:scaleX(1.0151);">ABA0003</div>
<div class="t" style="left:131.3px;top:460.39px;font-size:10px;line-height:11.17px;color:#000;transform:scaleX(0.9241);">ACEITE EN SPRAY CANOLA</div>
<div class="t" style="left:306.25px;top:460.39px;font-size:10px;line-height:11.17px;color:#000;transform:scaleX(0.9750);">MC CORMIC</div>
<div class="t" style="left:397.04px;top:460.39px;font-size:10px;line-height:11.17px;color:#000;transform:scaleX(0.9043);">CAJA</div>
<div class="t" style="left:468.29px;top:460.39px;font-size:10px;line-height:11.17px;color:#000;transform:scaleX(1.0478);">1.446</div>
<div class="t" style="left:552.68px;top:460.39px;font-size:10px;line-height:11.17px;color:#000;transform:scaleX(0.9545);">LT</div>
<div class="t" style="left:603.3px;top:460.39px;font-size:10px;line-height:11.17px;color:#000;transform:scaleX(1.0483);">$</div>
<div class="t" style="left:656.25px;top:460.39px;font-size:10px;line-height:11.17px;color:#000;transform:scaleX(1.0479);">142.20</div>
<div class="t" style="left:736.08px;top:460.39px;font-size:10px;line-height:11.17px;color:#000;transform:scaleX(1.0483);">0</div>
<div class="t" style="left:789px;top:460.39px;font-size:10px;line-height:11.17px;color:#000;transform:scaleX(1.0483);">$</div>
<div class="t" style="left:830.78px;top:460.39px;font-size:10px;line-height:11.17px;color:#000;transform:scaleX(1.0566);">-</div>
<div class="t" style="left:45.88px;top:475.46px;font-size:10px;line-height:11.17px;color:#000;transform:scaleX(1.0483);">4</div>
<div class="t" style="left:68.4px;top:475.46px;font-size:10px;line-height:11.17px;color:#000;transform:scaleX(1.0151);">ABA0004</div>
<div class="t" style="left:131.3px;top:475.46px;font-size:10px;line-height:11.17px;color:#000;transform:scaleX(0.9262);">ACEITE PURO DE AJONJOLI</div>
<div class="t" style="left:306.25px;top:475.46px;font-size:10px;line-height:11.17px;color:#000;transform:scaleX(0.9750);">MC CORMIC</div>
<div class="t" style="left:397.04px;top:475.46px;font-size:10px;line-height:11.17px;color:#000;transform:scaleX(0.9043);">CAJA</div>
<div class="t" style="left:468.29px;top:475.46px;font-size:10px;line-height:11.17px;color:#000;transform:scaleX(1.0478);">1.650</div>
<div class="t" style="left:552.68px;top:475.46px;font-size:10px;line-height:11.17px;color:#000;transform:scaleX(0.9545);">LT</div>
<div class="t" style="left:603.3px;top:475.46px;font-size:10px;line-height:11.17px;color:#000;transform:scaleX(1.0483);">$</div>
<div class="t" style="left:656.25px;top:475.46px;font-size:10px;line-height:11.17px;color:#000;transform:scaleX(1.0479);">575.30</div>
<div class="t" style="left:736.08px;top:475.46px;font-size:10px;line-height:11.17px;color:#000;transform:scaleX(1.0483);">0</div>
<div class="t" style="left:789px;top:475.46px;font-size:10px;line-height:11.17px;color:#000;transform:scaleX(1.0483);">$</div>
<div class="t" style="left:830.78px;top:475.46px;font-size:10px;line-height:11.17px;color:#000;transform:scaleX(1.0566);">-</div>
<div class="t" style="left:45.88px;top:490.53px;font-size:10px;line-height:11.17px;color:#000;transform:scaleX(1.0483);">5</div>
<div class="t" style="left:68.4px;top:490.53px;font-size:10px;line-height:11.17px;color:#000;transform:scaleX(1.0151);">ABA0006</div>
<div class="t" style="left:131.3px;top:490.53px;font-size:10px;line-height:11.17px;color:#000;transform:scaleX(0.9526);">ACEITUNA NEGRA</div>
<div class="t" style="left:306.25px;top:490.53px;font-size:10px;line-height:11.17px;color:#000;transform:scaleX(0.9750);">MC CORMIC</div>
<div class="t" style="left:397.04px;top:490.53px;font-size:10px;line-height:11.17px;color:#000;transform:scaleX(0.9043);">CAJA</div>
<div class="t" style="left:468.29px;top:490.53px;font-size:10px;line-height:11.17px;color:#000;transform:scaleX(1.0478);">0.900</div>
<div class="t" style="left:552.68px;top:490.53px;font-size:10px;line-height:11.17px;color:#000;transform:scaleX(0.9545);">LT</div>
<div class="t" style="left:603.3px;top:490.53px;font-size:10px;line-height:11.17px;color:#000;transform:scaleX(1.0483);">$</div>
<div class="t" style="left:656.25px;top:490.53px;font-size:10px;line-height:11.17px;color:#000;transform:scaleX(1.0479);">694.40</div>
<div class="t" style="left:736.08px;top:490.53px;font-size:10px;line-height:11.17px;color:#000;transform:scaleX(1.0483);">0</div>
<div class="t" style="left:789px;top:490.53px;font-size:10px;line-height:11.17px;color:#000;transform:scaleX(1.0483);">$</div>
<div class="t" style="left:830.78px;top:490.53px;font-size:10px;line-height:11.17px;color:#000;transform:scaleX(1.0566);">-</div>
<div class="t" style="left:45.88px;top:505.6px;font-size:10px;line-height:11.17px;color:#000;transform:scaleX(1.0483);">6</div>
<div class="t" style="left:68.4px;top:505.6px;font-size:10px;line-height:11.17px;color:#000;transform:scaleX(1.0151);">ABA0007</div>
<div class="t" style="left:131.3px;top:505.6px;font-size:10px;line-height:11.17px;color:#000;transform:scaleX(0.9278);">ADEREZO RANCH</div>
<div class="t" style="left:306.25px;top:505.6px;font-size:10px;line-height:11.17px;color:#000;transform:scaleX(0.9750);">MC CORMIC</div>
<div class="t" style="left:397.04px;top:505.6px;font-size:10px;line-height:11.17px;color:#000;transform:scaleX(0.9043);">CAJA</div>
<div class="t" style="left:468.29px;top:505.6px;font-size:10px;line-height:11.17px;color:#000;transform:scaleX(1.0478);">3.780</div>
<div class="t" style="left:551.28px;top:505.6px;font-size:10px;line-height:11.17px;color:#000;transform:scaleX(0.9161);">KG</div>
<div class="t" style="left:603.3px;top:505.6px;font-size:10px;line-height:11.17px;color:#000;transform:scaleX(1.0483);">$</div>
<div class="t" style="left:674.48px;top:505.6px;font-size:10px;line-height:11.17px;color:#000;transform:scaleX(1.0566);">-</div>
<div class="t" style="left:736.08px;top:505.6px;font-size:10px;line-height:11.17px;color:#000;transform:scaleX(1.0483);">0</div>
<div class="t" style="left:789px;top:505.6px;font-size:10px;line-height:11.17px;color:#000;transform:scaleX(1.0483);">$</div>
<div class="t" style="left:830.78px;top:505.6px;font-size:10px;line-height:11.17px;color:#000;transform:scaleX(1.0566);">-</div>
<div class="t" style="left:45.88px;top:520.67px;font-size:10px;line-height:11.17px;color:#000;transform:scaleX(1.0483);">7</div>
<div class="t" style="left:68.4px;top:520.67px;font-size:10px;line-height:11.17px;color:#000;transform:scaleX(1.0151);">ABA0008</div>
<div class="t" style="left:131.3px;top:520.67px;font-size:10px;line-height:11.17px;color:#000;transform:scaleX(0.9461);">AJO EN POLVO</div>
<div class="t" style="left:306.25px;top:520.67px;font-size:10px;line-height:11.17px;color:#000;transform:scaleX(0.9750);">MC CORMIC</div>
<div class="t" style="left:397.04px;top:520.67px;font-size:10px;line-height:11.17px;color:#000;transform:scaleX(0.9043);">CAJA</div>
<div class="t" style="left:468.29px;top:520.67px;font-size:10px;line-height:11.17px;color:#000;transform:scaleX(1.0478);">3.780</div>
<div class="t" style="left:552.68px;top:520.67px;font-size:10px;line-height:11.17px;color:#000;transform:scaleX(0.9545);">LT</div>
<div class="t" style="left:603.3px;top:520.67px;font-size:10px;line-height:11.17px;color:#000;transform:scaleX(1.0483);">$</div>
<div class="t" style="left:656.25px;top:520.67px;font-size:10px;line-height:11.17px;color:#000;transform:scaleX(1.0479);">429.70</div>
<div class="t" style="left:736.08px;top:520.67px;font-size:10px;line-height:11.17px;color:#000;transform:scaleX(1.0483);">0</div>
<div class="t" style="left:789px;top:520.67px;font-size:10px;line-height:11.17px;color:#000;transform:scaleX(1.0483);">$</div>
<div class="t" style="left:830.78px;top:520.67px;font-size:10px;line-height:11.17px;color:#000;transform:scaleX(1.0566);">-</div>
<div class="t" style="left:45.88px;top:535.74px;font-size:10px;line-height:11.17px;color:#000;transform:scaleX(1.0483);">8</div>
<div class="t" style="left:68.4px;top:535.74px;font-size:10px;line-height:11.17px;color:#000;transform:scaleX(1.0151);">ABA0010</div>
<div class="t" style="left:131.3px;top:535.74px;font-size:10px;line-height:11.17px;color:#000;transform:scaleX(0.9300);">AJONJOLI NEGRO</div>
<div class="t" style="left:306.25px;top:535.74px;font-size:10px;line-height:11.17px;color:#000;transform:scaleX(0.9750);">MC CORMIC</div>
<div class="t" style="left:397.04px;top:535.74px;font-size:10px;line-height:11.17px;color:#000;transform:scaleX(0.9043);">CAJA</div>
<div class="t" style="left:468.29px;top:535.74px;font-size:10px;line-height:11.17px;color:#000;transform:scaleX(1.0478);">1.000</div>
<div class="t" style="left:551.28px;top:535.74px;font-size:10px;line-height:11.17px;color:#000;transform:scaleX(0.9161);">KG</div>
<div class="t" style="left:603.3px;top:535.74px;font-size:10px;line-height:11.17px;color:#000;transform:scaleX(1.0483);">$</div>
<div class="t" style="left:662.08px;top:535.74px;font-size:10px;line-height:11.17px;color:#000;transform:scaleX(1.0478);">78.00</div>
<div class="t" style="left:736.08px;top:535.74px;font-size:10px;line-height:11.17px;color:#000;transform:scaleX(1.0483);">0</div>
<div class="t" style="left:789px;top:535.74px;font-size:10px;line-height:11.17px;color:#000;transform:scaleX(1.0483);">$</div>
<div class="t" style="left:830.78px;top:535.74px;font-size:10px;line-height:11.17px;color:#000;transform:scaleX(1.0566);">-</div>
<div class="t" style="left:45.88px;top:550.81px;font-size:10px;line-height:11.17px;color:#000;transform:scaleX(1.0483);">9</div>
<div class="t" style="left:68.4px;top:550.81px;font-size:10px;line-height:11.17px;color:#000;transform:scaleX(1.0332);">ABA0011</div>
<div class="t" style="left:131.3px;top:550.81px;font-size:10px;line-height:11.17px;color:#000;transform:scaleX(0.9436);">ALCAPARRA VERMEX</div>
<div class="t" style="left:306.25px;top:550.81px;font-size:10px;line-height:11.17px;color:#000;transform:scaleX(0.9750);">MC CORMIC</div>
<div class="t" style="left:397.04px;top:550.81px;font-size:10px;line-height:11.17px;color:#000;transform:scaleX(0.9043);">CAJA</div>
<div class="t" style="left:468.29px;top:550.81px;font-size:10px;line-height:11.17px;color:#000;transform:scaleX(1.0478);">0.935</div>
<div class="t" style="left:551.28px;top:550.81px;font-size:10px;line-height:11.17px;color:#000;transform:scaleX(0.9161);">KG</div>
<div class="t" style="left:603.3px;top:550.81px;font-size:10px;line-height:11.17px;color:#000;transform:scaleX(1.0483);">$</div>
<div class="t" style="left:662.08px;top:550.81px;font-size:10px;line-height:11.17px;color:#000;transform:scaleX(1.0478);">71.50</div>
<div class="t" style="left:736.08px;top:550.81px;font-size:10px;line-height:11.17px;color:#000;transform:scaleX(1.0483);">0</div>
<div class="t" style="left:789px;top:550.81px;font-size:10px;line-height:11.17px;color:#000;transform:scaleX(1.0483);">$</div>
<div class="t" style="left:830.78px;top:550.81px;font-size:10px;line-height:11.17px;color:#000;transform:scaleX(1.0566);">-</div>
<div class="t" style="left:42.97px;top:565.88px;font-size:10px;line-height:11.17px;color:#000;transform:scaleX(1.0483);">10</div>
<div class="t" style="left:68.4px;top:565.88px;font-size:10px;line-height:11.17px;color:#000;transform:scaleX(1.0151);">ABA0013</div>
<div class="t" style="left:131.3px;top:565.88px;font-size:10px;line-height:11.17px;color:#000;transform:scaleX(0.9546);">ALMENDRA FILETEADA</div>
<div class="t" style="left:306.25px;top:565.88px;font-size:10px;line-height:11.17px;color:#000;transform:scaleX(0.9750);">MC CORMIC</div>
<div class="t" style="left:397.04px;top:565.88px;font-size:10px;line-height:11.17px;color:#000;transform:scaleX(0.9043);">CAJA</div>
<div class="t" style="left:468.29px;top:565.88px;font-size:10px;line-height:11.17px;color:#000;transform:scaleX(1.0478);">1.000</div>
<div class="t" style="left:551.28px;top:565.88px;font-size:10px;line-height:11.17px;color:#000;transform:scaleX(0.9161);">KG</div>
<div class="t" style="left:603.3px;top:565.88px;font-size:10px;line-height:11.17px;color:#000;transform:scaleX(1.0483);">$</div>
<div class="t" style="left:674.48px;top:565.88px;font-size:10px;line-height:11.17px;color:#000;transform:scaleX(1.0566);">-</div>
<div class="t" style="left:736.08px;top:565.88px;font-size:10px;line-height:11.17px;color:#000;transform:scaleX(1.0483);">0</div>
<div class="t" style="left:789px;top:565.88px;font-size:10px;line-height:11.17px;color:#000;transform:scaleX(1.0483);">$</div>
<div class="t" style="left:830.78px;top:565.88px;font-size:10px;line-height:11.17px;color:#000;transform:scaleX(1.0566);">-</div>
<div class="t" style="left:42.97px;top:580.95px;font-size:10px;line-height:11.17px;color:#000;transform:scaleX(1.1233);">11</div>
<div class="t" style="left:68.4px;top:580.95px;font-size:10px;line-height:11.17px;color:#000;transform:scaleX(1.0151);">ABA0014</div>
<div class="t" style="left:131.3px;top:580.95px;font-size:10px;line-height:11.17px;color:#000;transform:scaleX(0.9000);">ANIS ESTRELLA</div>
<div class="t" style="left:306.25px;top:580.95px;font-size:10px;line-height:11.17px;color:#000;transform:scaleX(0.9750);">MC CORMIC</div>
<div class="t" style="left:397.04px;top:580.95px;font-size:10px;line-height:11.17px;color:#000;transform:scaleX(0.9043);">CAJA</div>
<div class="t" style="left:468.29px;top:580.95px;font-size:10px;line-height:11.17px;color:#000;transform:scaleX(1.0478);">1.000</div>
<div class="t" style="left:551.28px;top:580.95px;font-size:10px;line-height:11.17px;color:#000;transform:scaleX(0.9161);">KG</div>
<div class="t" style="left:603.3px;top:580.95px;font-size:10px;line-height:11.17px;color:#000;transform:scaleX(1.0483);">$</div>
<div class="t" style="left:674.48px;top:580.95px;font-size:10px;line-height:11.17px;color:#000;transform:scaleX(1.0566);">-</div>
<div class="t" style="left:736.08px;top:580.95px;font-size:10px;line-height:11.17px;color:#000;transform:scaleX(1.0483);">0</div>
<div class="t" style="left:789px;top:580.95px;font-size:10px;line-height:11.17px;color:#000;transform:scaleX(1.0483);">$</div>
<div class="t" style="left:830.78px;top:580.95px;font-size:10px;line-height:11.17px;color:#000;transform:scaleX(1.0566);">-</div>
<div class="t" style="left:42.97px;top:596.02px;font-size:10px;line-height:11.17px;color:#000;transform:scaleX(1.0483);">12</div>
<div class="t" style="left:68.4px;top:596.02px;font-size:10px;line-height:11.17px;color:#000;transform:scaleX(1.0151);">ABA0016</div>
<div class="t" style="left:131.3px;top:596.02px;font-size:10px;line-height:11.17px;color:#000;transform:scaleX(0.9395);">ARROZ GRANO</div>
<div class="t" style="left:306.25px;top:596.02px;font-size:10px;line-height:11.17px;color:#000;transform:scaleX(0.9750);">MC CORMIC</div>
<div class="t" style="left:397.04px;top:596.02px;font-size:10px;line-height:11.17px;color:#000;transform:scaleX(0.9043);">CAJA</div>
<div class="t" style="left:468.29px;top:596.02px;font-size:10px;line-height:11.17px;color:#000;transform:scaleX(1.0478);">1.000</div>
<div class="t" style="left:551.28px;top:596.02px;font-size:10px;line-height:11.17px;color:#000;transform:scaleX(0.9161);">KG</div>
<div class="t" style="left:603.3px;top:596.02px;font-size:10px;line-height:11.17px;color:#000;transform:scaleX(1.0483);">$</div>
<div class="t" style="left:674.48px;top:596.02px;font-size:10px;line-height:11.17px;color:#000;transform:scaleX(1.0566);">-</div>
<div class="t" style="left:736.08px;top:596.02px;font-size:10px;line-height:11.17px;color:#000;transform:scaleX(1.0483);">0</div>
<div class="t" style="left:789px;top:596.02px;font-size:10px;line-height:11.17px;color:#000;transform:scaleX(1.0483);">$</div>
<div class="t" style="left:830.78px;top:596.02px;font-size:10px;line-height:11.17px;color:#000;transform:scaleX(1.0566);">-</div>
<div class="t" style="left:42.97px;top:611.09px;font-size:10px;line-height:11.17px;color:#000;transform:scaleX(1.0483);">13</div>
<div class="t" style="left:68.4px;top:611.09px;font-size:10px;line-height:11.17px;color:#000;transform:scaleX(1.0151);">ABA0017</div>
<div class="t" style="left:131.3px;top:611.09px;font-size:10px;line-height:11.17px;color:#000;transform:scaleX(0.9152);">ARROZ LABRADOR SUPER EXTRA</div>
<div class="t" style="left:306.25px;top:611.09px;font-size:10px;line-height:11.17px;color:#000;transform:scaleX(0.9750);">MC CORMIC</div>
<div class="t" style="left:397.04px;top:611.09px;font-size:10px;line-height:11.17px;color:#000;transform:scaleX(0.9043);">CAJA</div>
<div class="t" style="left:468.29px;top:611.09px;font-size:10px;line-height:11.17px;color:#000;transform:scaleX(1.0478);">1.000</div>
<div class="t" style="left:551.28px;top:611.09px;font-size:10px;line-height:11.17px;color:#000;transform:scaleX(0.9161);">KG</div>
<div class="t" style="left:603.3px;top:611.09px;font-size:10px;line-height:11.17px;color:#000;transform:scaleX(1.0483);">$</div>
<div class="t" style="left:662.08px;top:611.09px;font-size:10px;line-height:11.17px;color:#000;transform:scaleX(1.0478);">23.30</div>
<div class="t" style="left:736.08px;top:611.09px;font-size:10px;line-height:11.17px;color:#000;transform:scaleX(1.0483);">0</div>
<div class="t" style="left:789px;top:611.09px;font-size:10px;line-height:11.17px;color:#000;transform:scaleX(1.0483);">$</div>
<div class="t" style="left:830.78px;top:611.09px;font-size:10px;line-height:11.17px;color:#000;transform:scaleX(1.0566);">-</div>
<div class="t" style="left:42.97px;top:626.16px;font-size:10px;line-height:11.17px;color:#000;transform:scaleX(1.0483);">14</div>
<div class="t" style="left:68.4px;top:626.16px;font-size:10px;line-height:11.17px;color:#000;transform:scaleX(1.0151);">ABA0018</div>
<div class="t" style="left:131.3px;top:626.16px;font-size:10px;line-height:11.17px;color:#000;transform:scaleX(0.9939);">ATUN EN AGUA</div>
<div class="t" style="left:306.25px;top:626.16px;font-size:10px;line-height:11.17px;color:#000;transform:scaleX(0.9750);">MC CORMIC</div>
<div class="t" style="left:397.04px;top:626.16px;font-size:10px;line-height:11.17px;color:#000;transform:scaleX(0.9043);">CAJA</div>
<div class="t" style="left:468.29px;top:626.16px;font-size:10px;line-height:11.17px;color:#000;transform:scaleX(1.0478);">1.000</div>
<div class="t" style="left:551.28px;top:626.16px;font-size:10px;line-height:11.17px;color:#000;transform:scaleX(0.9161);">KG</div>
<div class="t" style="left:603.3px;top:626.16px;font-size:10px;line-height:11.17px;color:#000;transform:scaleX(1.0483);">$</div>
<div class="t" style="left:674.48px;top:626.16px;font-size:10px;line-height:11.17px;color:#000;transform:scaleX(1.0566);">-</div>
<div class="t" style="left:736.08px;top:626.16px;font-size:10px;line-height:11.17px;color:#000;transform:scaleX(1.0483);">0</div>
<div class="t" style="left:789px;top:626.16px;font-size:10px;line-height:11.17px;color:#000;transform:scaleX(1.0483);">$</div>
<div class="t" style="left:830.78px;top:626.16px;font-size:10px;line-height:11.17px;color:#000;transform:scaleX(1.0566);">-</div>
<div class="t" style="left:1294.67px;top:366.85px;font-size:10px;line-height:11.17px;color:#000;font-weight:bold;-webkit-text-stroke:0;transform:scaleX(0.9668);">PEDIDO SEMANA 2</div>
<div class="t" style="left:932.17px;top:397.95px;font-size:10px;line-height:11.17px;color:#fff;font-weight:bold;-webkit-text-stroke:0;transform:scaleX(0.9833);">CANT.</div>
<div class="t" style="left:1014.16px;top:390.55px;font-size:10px;line-height:11.17px;color:#fff;transform:scaleX(0.9513);">CÓDIGO</div>
<div class="t" style="left:1006.65px;top:413.75px;font-size:10px;line-height:11.17px;color:#fff;transform:scaleX(0.9397);">PRODUCTO</div>
<div class="t" style="left:1125.2px;top:397.95px;font-size:10px;line-height:11.17px;color:#fff;font-weight:bold;-webkit-text-stroke:0;transform:scaleX(0.9435);">NOMBRE DEL PRODUCTO</div>
<div class="t" style="left:1373.95px;top:390.55px;font-size:10px;line-height:11.17px;color:#fff;font-weight:bold;-webkit-text-stroke:0;transform:scaleX(0.9261);">PRESENTACIÓN</div>
<div class="t" style="left:1295.55px;top:414.15px;font-size:10px;line-height:11.17px;color:#fff;font-weight:bold;-webkit-text-stroke:0;transform:scaleX(0.9672);">MARCA</div>
<div class="t" style="left:1352.88px;top:414.15px;font-size:10px;line-height:11.17px;color:#fff;font-weight:bold;-webkit-text-stroke:0;transform:scaleX(0.9843);">EMPAQUE</div>
<div class="t" style="left:1427.27px;top:414.15px;font-size:10px;line-height:11.17px;color:#fff;font-weight:bold;-webkit-text-stroke:0;transform:scaleX(0.9833);">CANT.</div>
<div class="t" style="left:1492.48px;top:414.15px;font-size:10px;line-height:11.17px;color:#fff;font-weight:bold;-webkit-text-stroke:0;transform:scaleX(1.0303);">UNID.</div>
<div class="t" style="left:943.73px;top:430.25px;font-size:10px;line-height:11.17px;color:#000;transform:scaleX(1.0483);">1</div>
<div class="t" style="left:980.4px;top:430.25px;font-size:10px;line-height:11.17px;color:#000;transform:scaleX(1.0151);">ABA0001</div>
<div class="t" style="left:1090.1px;top:430.25px;font-size:10px;line-height:11.17px;color:#000;transform:scaleX(0.9363);">ACEITE DE OLIVA</div>
<div class="t" style="left:1284.85px;top:430.25px;font-size:10px;line-height:11.17px;color:#000;transform:scaleX(0.9750);">MC CORMIC</div>
<div class="t" style="left:1365.84px;top:430.25px;font-size:10px;line-height:11.17px;color:#000;transform:scaleX(0.9043);">CAJA</div>
<div class="t" style="left:1428.64px;top:430.25px;font-size:10px;line-height:11.17px;color:#000;transform:scaleX(1.0478);">5.000</div>
<div class="t" style="left:1501.28px;top:430.25px;font-size:10px;line-height:11.17px;color:#000;transform:scaleX(0.9545);">LT</div>
<div class="t" style="left:943.73px;top:445.32px;font-size:10px;line-height:11.17px;color:#000;transform:scaleX(1.0483);">2</div>
<div class="t" style="left:980.4px;top:445.32px;font-size:10px;line-height:11.17px;color:#000;transform:scaleX(1.0151);">ABA0002</div>
<div class="t" style="left:1090.1px;top:445.32px;font-size:10px;line-height:11.17px;color:#000;transform:scaleX(0.9317);">ACEITE DE TRUFA NEGRA</div>
<div class="t" style="left:1284.85px;top:445.32px;font-size:10px;line-height:11.17px;color:#000;transform:scaleX(0.9750);">MC CORMIC</div>
<div class="t" style="left:1365.84px;top:445.32px;font-size:10px;line-height:11.17px;color:#000;transform:scaleX(0.9043);">CAJA</div>
<div class="t" style="left:1428.64px;top:445.32px;font-size:10px;line-height:11.17px;color:#000;transform:scaleX(1.0478);">0.250</div>
<div class="t" style="left:1501.28px;top:445.32px;font-size:10px;line-height:11.17px;color:#000;transform:scaleX(0.9545);">LT</div>
<div class="t" style="left:943.73px;top:460.39px;font-size:10px;line-height:11.17px;color:#000;transform:scaleX(1.0483);">3</div>
<div class="t" style="left:980.4px;top:460.39px;font-size:10px;line-height:11.17px;color:#000;transform:scaleX(1.0151);">ABA0003</div>
<div class="t" style="left:1090.1px;top:460.39px;font-size:10px;line-height:11.17px;color:#000;transform:scaleX(0.9241);">ACEITE EN SPRAY CANOLA</div>
<div class="t" style="left:1284.85px;top:460.39px;font-size:10px;line-height:11.17px;color:#000;transform:scaleX(0.9750);">MC CORMIC</div>
<div class="t" style="left:1365.84px;top:460.39px;font-size:10px;line-height:11.17px;color:#000;transform:scaleX(0.9043);">CAJA</div>
<div class="t" style="left:1428.64px;top:460.39px;font-size:10px;line-height:11.17px;color:#000;transform:scaleX(1.0478);">1.446</div>
<div class="t" style="left:1501.28px;top:460.39px;font-size:10px;line-height:11.17px;color:#000;transform:scaleX(0.9545);">LT</div>
<div class="t" style="left:943.73px;top:475.46px;font-size:10px;line-height:11.17px;color:#000;transform:scaleX(1.0483);">4</div>
<div class="t" style="left:980.4px;top:475.46px;font-size:10px;line-height:11.17px;color:#000;transform:scaleX(1.0151);">ABA0004</div>
<div class="t" style="left:1090.1px;top:475.46px;font-size:10px;line-height:11.17px;color:#000;transform:scaleX(0.9262);">ACEITE PURO DE AJONJOLI</div>
<div class="t" style="left:1284.85px;top:475.46px;font-size:10px;line-height:11.17px;color:#000;transform:scaleX(0.9750);">MC CORMIC</div>
<div class="t" style="left:1365.84px;top:475.46px;font-size:10px;line-height:11.17px;color:#000;transform:scaleX(0.9043);">CAJA</div>
<div class="t" style="left:1428.64px;top:475.46px;font-size:10px;line-height:11.17px;color:#000;transform:scaleX(1.0478);">1.650</div>
<div class="t" style="left:1501.28px;top:475.46px;font-size:10px;line-height:11.17px;color:#000;transform:scaleX(0.9545);">LT</div>
<div class="t" style="left:943.73px;top:490.53px;font-size:10px;line-height:11.17px;color:#000;transform:scaleX(1.0483);">5</div>
<div class="t" style="left:980.4px;top:490.53px;font-size:10px;line-height:11.17px;color:#000;transform:scaleX(1.0151);">ABA0006</div>
<div class="t" style="left:1090.1px;top:490.53px;font-size:10px;line-height:11.17px;color:#000;transform:scaleX(0.9526);">ACEITUNA NEGRA</div>
<div class="t" style="left:1284.85px;top:490.53px;font-size:10px;line-height:11.17px;color:#000;transform:scaleX(0.9750);">MC CORMIC</div>
<div class="t" style="left:1365.84px;top:490.53px;font-size:10px;line-height:11.17px;color:#000;transform:scaleX(0.9043);">CAJA</div>
<div class="t" style="left:1428.64px;top:490.53px;font-size:10px;line-height:11.17px;color:#000;transform:scaleX(1.0478);">0.900</div>
<div class="t" style="left:1501.28px;top:490.53px;font-size:10px;line-height:11.17px;color:#000;transform:scaleX(0.9545);">LT</div>
<div class="t" style="left:943.73px;top:505.6px;font-size:10px;line-height:11.17px;color:#000;transform:scaleX(1.0483);">6</div>
<div class="t" style="left:980.4px;top:505.6px;font-size:10px;line-height:11.17px;color:#000;transform:scaleX(1.0151);">ABA0007</div>
<div class="t" style="left:1090.1px;top:505.6px;font-size:10px;line-height:11.17px;color:#000;transform:scaleX(0.9278);">ADEREZO RANCH</div>
<div class="t" style="left:1284.85px;top:505.6px;font-size:10px;line-height:11.17px;color:#000;transform:scaleX(0.9750);">MC CORMIC</div>
<div class="t" style="left:1365.84px;top:505.6px;font-size:10px;line-height:11.17px;color:#000;transform:scaleX(0.9043);">CAJA</div>
<div class="t" style="left:1428.64px;top:505.6px;font-size:10px;line-height:11.17px;color:#000;transform:scaleX(1.0478);">3.780</div>
<div class="t" style="left:1499.88px;top:505.6px;font-size:10px;line-height:11.17px;color:#000;transform:scaleX(0.9161);">KG</div>
<div class="t" style="left:943.73px;top:520.67px;font-size:10px;line-height:11.17px;color:#000;transform:scaleX(1.0483);">7</div>
<div class="t" style="left:980.4px;top:520.67px;font-size:10px;line-height:11.17px;color:#000;transform:scaleX(1.0151);">ABA0008</div>
<div class="t" style="left:1090.1px;top:520.67px;font-size:10px;line-height:11.17px;color:#000;transform:scaleX(0.9461);">AJO EN POLVO</div>
<div class="t" style="left:1284.85px;top:520.67px;font-size:10px;line-height:11.17px;color:#000;transform:scaleX(0.9750);">MC CORMIC</div>
<div class="t" style="left:1365.84px;top:520.67px;font-size:10px;line-height:11.17px;color:#000;transform:scaleX(0.9043);">CAJA</div>
<div class="t" style="left:1428.64px;top:520.67px;font-size:10px;line-height:11.17px;color:#000;transform:scaleX(1.0478);">3.780</div>
<div class="t" style="left:1501.28px;top:520.67px;font-size:10px;line-height:11.17px;color:#000;transform:scaleX(0.9545);">LT</div>
<div class="t" style="left:943.73px;top:535.74px;font-size:10px;line-height:11.17px;color:#000;transform:scaleX(1.0483);">8</div>
<div class="t" style="left:980.4px;top:535.74px;font-size:10px;line-height:11.17px;color:#000;transform:scaleX(1.0151);">ABA0010</div>
<div class="t" style="left:1090.1px;top:535.74px;font-size:10px;line-height:11.17px;color:#000;transform:scaleX(0.9300);">AJONJOLI NEGRO</div>
<div class="t" style="left:1284.85px;top:535.74px;font-size:10px;line-height:11.17px;color:#000;transform:scaleX(0.9750);">MC CORMIC</div>
<div class="t" style="left:1365.84px;top:535.74px;font-size:10px;line-height:11.17px;color:#000;transform:scaleX(0.9043);">CAJA</div>
<div class="t" style="left:1428.64px;top:535.74px;font-size:10px;line-height:11.17px;color:#000;transform:scaleX(1.0478);">1.000</div>
<div class="t" style="left:1499.88px;top:535.74px;font-size:10px;line-height:11.17px;color:#000;transform:scaleX(0.9161);">KG</div>
<div class="t" style="left:943.73px;top:550.81px;font-size:10px;line-height:11.17px;color:#000;transform:scaleX(1.0483);">9</div>
<div class="t" style="left:980.4px;top:550.81px;font-size:10px;line-height:11.17px;color:#000;transform:scaleX(1.0332);">ABA0011</div>
<div class="t" style="left:1090.1px;top:550.81px;font-size:10px;line-height:11.17px;color:#000;transform:scaleX(0.9436);">ALCAPARRA VERMEX</div>
<div class="t" style="left:1284.85px;top:550.81px;font-size:10px;line-height:11.17px;color:#000;transform:scaleX(0.9750);">MC CORMIC</div>
<div class="t" style="left:1365.84px;top:550.81px;font-size:10px;line-height:11.17px;color:#000;transform:scaleX(0.9043);">CAJA</div>
<div class="t" style="left:1428.64px;top:550.81px;font-size:10px;line-height:11.17px;color:#000;transform:scaleX(1.0478);">0.935</div>
<div class="t" style="left:1499.88px;top:550.81px;font-size:10px;line-height:11.17px;color:#000;transform:scaleX(0.9161);">KG</div>
<div class="t" style="left:940.82px;top:565.88px;font-size:10px;line-height:11.17px;color:#000;transform:scaleX(1.0483);">10</div>
<div class="t" style="left:980.4px;top:565.88px;font-size:10px;line-height:11.17px;color:#000;transform:scaleX(1.0151);">ABA0013</div>
<div class="t" style="left:1090.1px;top:565.88px;font-size:10px;line-height:11.17px;color:#000;transform:scaleX(0.9546);">ALMENDRA FILETEADA</div>
<div class="t" style="left:1284.85px;top:565.88px;font-size:10px;line-height:11.17px;color:#000;transform:scaleX(0.9750);">MC CORMIC</div>
<div class="t" style="left:1365.84px;top:565.88px;font-size:10px;line-height:11.17px;color:#000;transform:scaleX(0.9043);">CAJA</div>
<div class="t" style="left:1428.64px;top:565.88px;font-size:10px;line-height:11.17px;color:#000;transform:scaleX(1.0478);">1.000</div>
<div class="t" style="left:1499.88px;top:565.88px;font-size:10px;line-height:11.17px;color:#000;transform:scaleX(0.9161);">KG</div>
<div class="t" style="left:940.82px;top:580.95px;font-size:10px;line-height:11.17px;color:#000;transform:scaleX(1.1233);">11</div>
<div class="t" style="left:980.4px;top:580.95px;font-size:10px;line-height:11.17px;color:#000;transform:scaleX(1.0151);">ABA0014</div>
<div class="t" style="left:1090.1px;top:580.95px;font-size:10px;line-height:11.17px;color:#000;transform:scaleX(0.9000);">ANIS ESTRELLA</div>
<div class="t" style="left:1284.85px;top:580.95px;font-size:10px;line-height:11.17px;color:#000;transform:scaleX(0.9750);">MC CORMIC</div>
<div class="t" style="left:1365.84px;top:580.95px;font-size:10px;line-height:11.17px;color:#000;transform:scaleX(0.9043);">CAJA</div>
<div class="t" style="left:1428.64px;top:580.95px;font-size:10px;line-height:11.17px;color:#000;transform:scaleX(1.0478);">1.000</div>
<div class="t" style="left:1499.88px;top:580.95px;font-size:10px;line-height:11.17px;color:#000;transform:scaleX(0.9161);">KG</div>
<div class="t" style="left:940.82px;top:596.02px;font-size:10px;line-height:11.17px;color:#000;transform:scaleX(1.0483);">12</div>
<div class="t" style="left:980.4px;top:596.02px;font-size:10px;line-height:11.17px;color:#000;transform:scaleX(1.0151);">ABA0016</div>
<div class="t" style="left:1090.1px;top:596.02px;font-size:10px;line-height:11.17px;color:#000;transform:scaleX(0.9395);">ARROZ GRANO</div>
<div class="t" style="left:1284.85px;top:596.02px;font-size:10px;line-height:11.17px;color:#000;transform:scaleX(0.9750);">MC CORMIC</div>
<div class="t" style="left:1365.84px;top:596.02px;font-size:10px;line-height:11.17px;color:#000;transform:scaleX(0.9043);">CAJA</div>
<div class="t" style="left:1428.64px;top:596.02px;font-size:10px;line-height:11.17px;color:#000;transform:scaleX(1.0478);">1.000</div>
<div class="t" style="left:1499.88px;top:596.02px;font-size:10px;line-height:11.17px;color:#000;transform:scaleX(0.9161);">KG</div>
<div class="t" style="left:940.82px;top:611.09px;font-size:10px;line-height:11.17px;color:#000;transform:scaleX(1.0483);">13</div>
<div class="t" style="left:980.4px;top:611.09px;font-size:10px;line-height:11.17px;color:#000;transform:scaleX(1.0151);">ABA0017</div>
<div class="t" style="left:1090.1px;top:611.09px;font-size:10px;line-height:11.17px;color:#000;transform:scaleX(0.9152);">ARROZ LABRADOR SUPER EXTRA</div>
<div class="t" style="left:1284.85px;top:611.09px;font-size:10px;line-height:11.17px;color:#000;transform:scaleX(0.9750);">MC CORMIC</div>
<div class="t" style="left:1365.84px;top:611.09px;font-size:10px;line-height:11.17px;color:#000;transform:scaleX(0.9043);">CAJA</div>
<div class="t" style="left:1428.64px;top:611.09px;font-size:10px;line-height:11.17px;color:#000;transform:scaleX(1.0478);">1.000</div>
<div class="t" style="left:1499.88px;top:611.09px;font-size:10px;line-height:11.17px;color:#000;transform:scaleX(0.9161);">KG</div>
<div class="t" style="left:940.82px;top:626.16px;font-size:10px;line-height:11.17px;color:#000;transform:scaleX(1.0483);">14</div>
<div class="t" style="left:980.4px;top:626.16px;font-size:10px;line-height:11.17px;color:#000;transform:scaleX(1.0151);">ABA0018</div>
<div class="t" style="left:1090.1px;top:626.16px;font-size:10px;line-height:11.17px;color:#000;transform:scaleX(0.9939);">ATUN EN AGUA</div>
<div class="t" style="left:1284.85px;top:626.16px;font-size:10px;line-height:11.17px;color:#000;transform:scaleX(0.9750);">MC CORMIC</div>
<div class="t" style="left:1365.84px;top:626.16px;font-size:10px;line-height:11.17px;color:#000;transform:scaleX(0.9043);">CAJA</div>
<div class="t" style="left:1428.64px;top:626.16px;font-size:10px;line-height:11.17px;color:#000;transform:scaleX(1.0478);">1.000</div>
<div class="t" style="left:1499.88px;top:626.16px;font-size:10px;line-height:11.17px;color:#000;transform:scaleX(0.9161);">KG</div>
</div></div>
<div class="t" style="left:12.5px;top:8.15px;font-size:14.2px;line-height:15.86px;color:#1a1a1a;transform:scaleX(0.9573);">H266</div>
<div class="t" style="left:189.5px;top:2.8px;font-family:'Liberation Serif',serif;font-style:italic;font-size:19px;line-height:22px;color:#1a1a1a;letter-spacing:0px">fx</div>
<div class="t" style="left:121.7px;top:650.42px;font-size:13.9px;line-height:15.53px;color:#111;transform:scaleX(0.9813);">CONSOLIDADO</div>
<div class="t" style="left:250.7px;top:650.42px;font-size:13.9px;line-height:15.53px;color:#2b2b2b;transform:scaleX(0.8941);">PROVEEDORES</div>
<div class="t" style="left:377.3px;top:650.42px;font-size:13.9px;line-height:15.53px;color:#111;transform:scaleX(0.9647);">CONTROL INVENTARIOS</div>
<div class="t" style="left:565.3px;top:646.82px;font-size:13.9px;line-height:15.53px;color:#111;transform:scaleX(0.9655);">ORDENES COMPRA</div>
<div class="t" style="left:724px;top:650.42px;font-size:13.9px;line-height:15.53px;color:#2b2b2b;transform:scaleX(0.9415);">POPUL VTAS PROTEINAS</div>
<div class="t" style="left:916px;top:650.42px;font-size:13.9px;line-height:15.53px;color:#2b2b2b;transform:scaleX(0.9872);">FORMATO INVENTARIO</div>
<div id="cut"><div class="t" style="left:10.5px;top:10.42px;font-size:13.9px;line-height:15.53px;color:#111;transform:scaleX(0.889)">DESPERDICIO MATERIAL</div></div>
</body></html>
